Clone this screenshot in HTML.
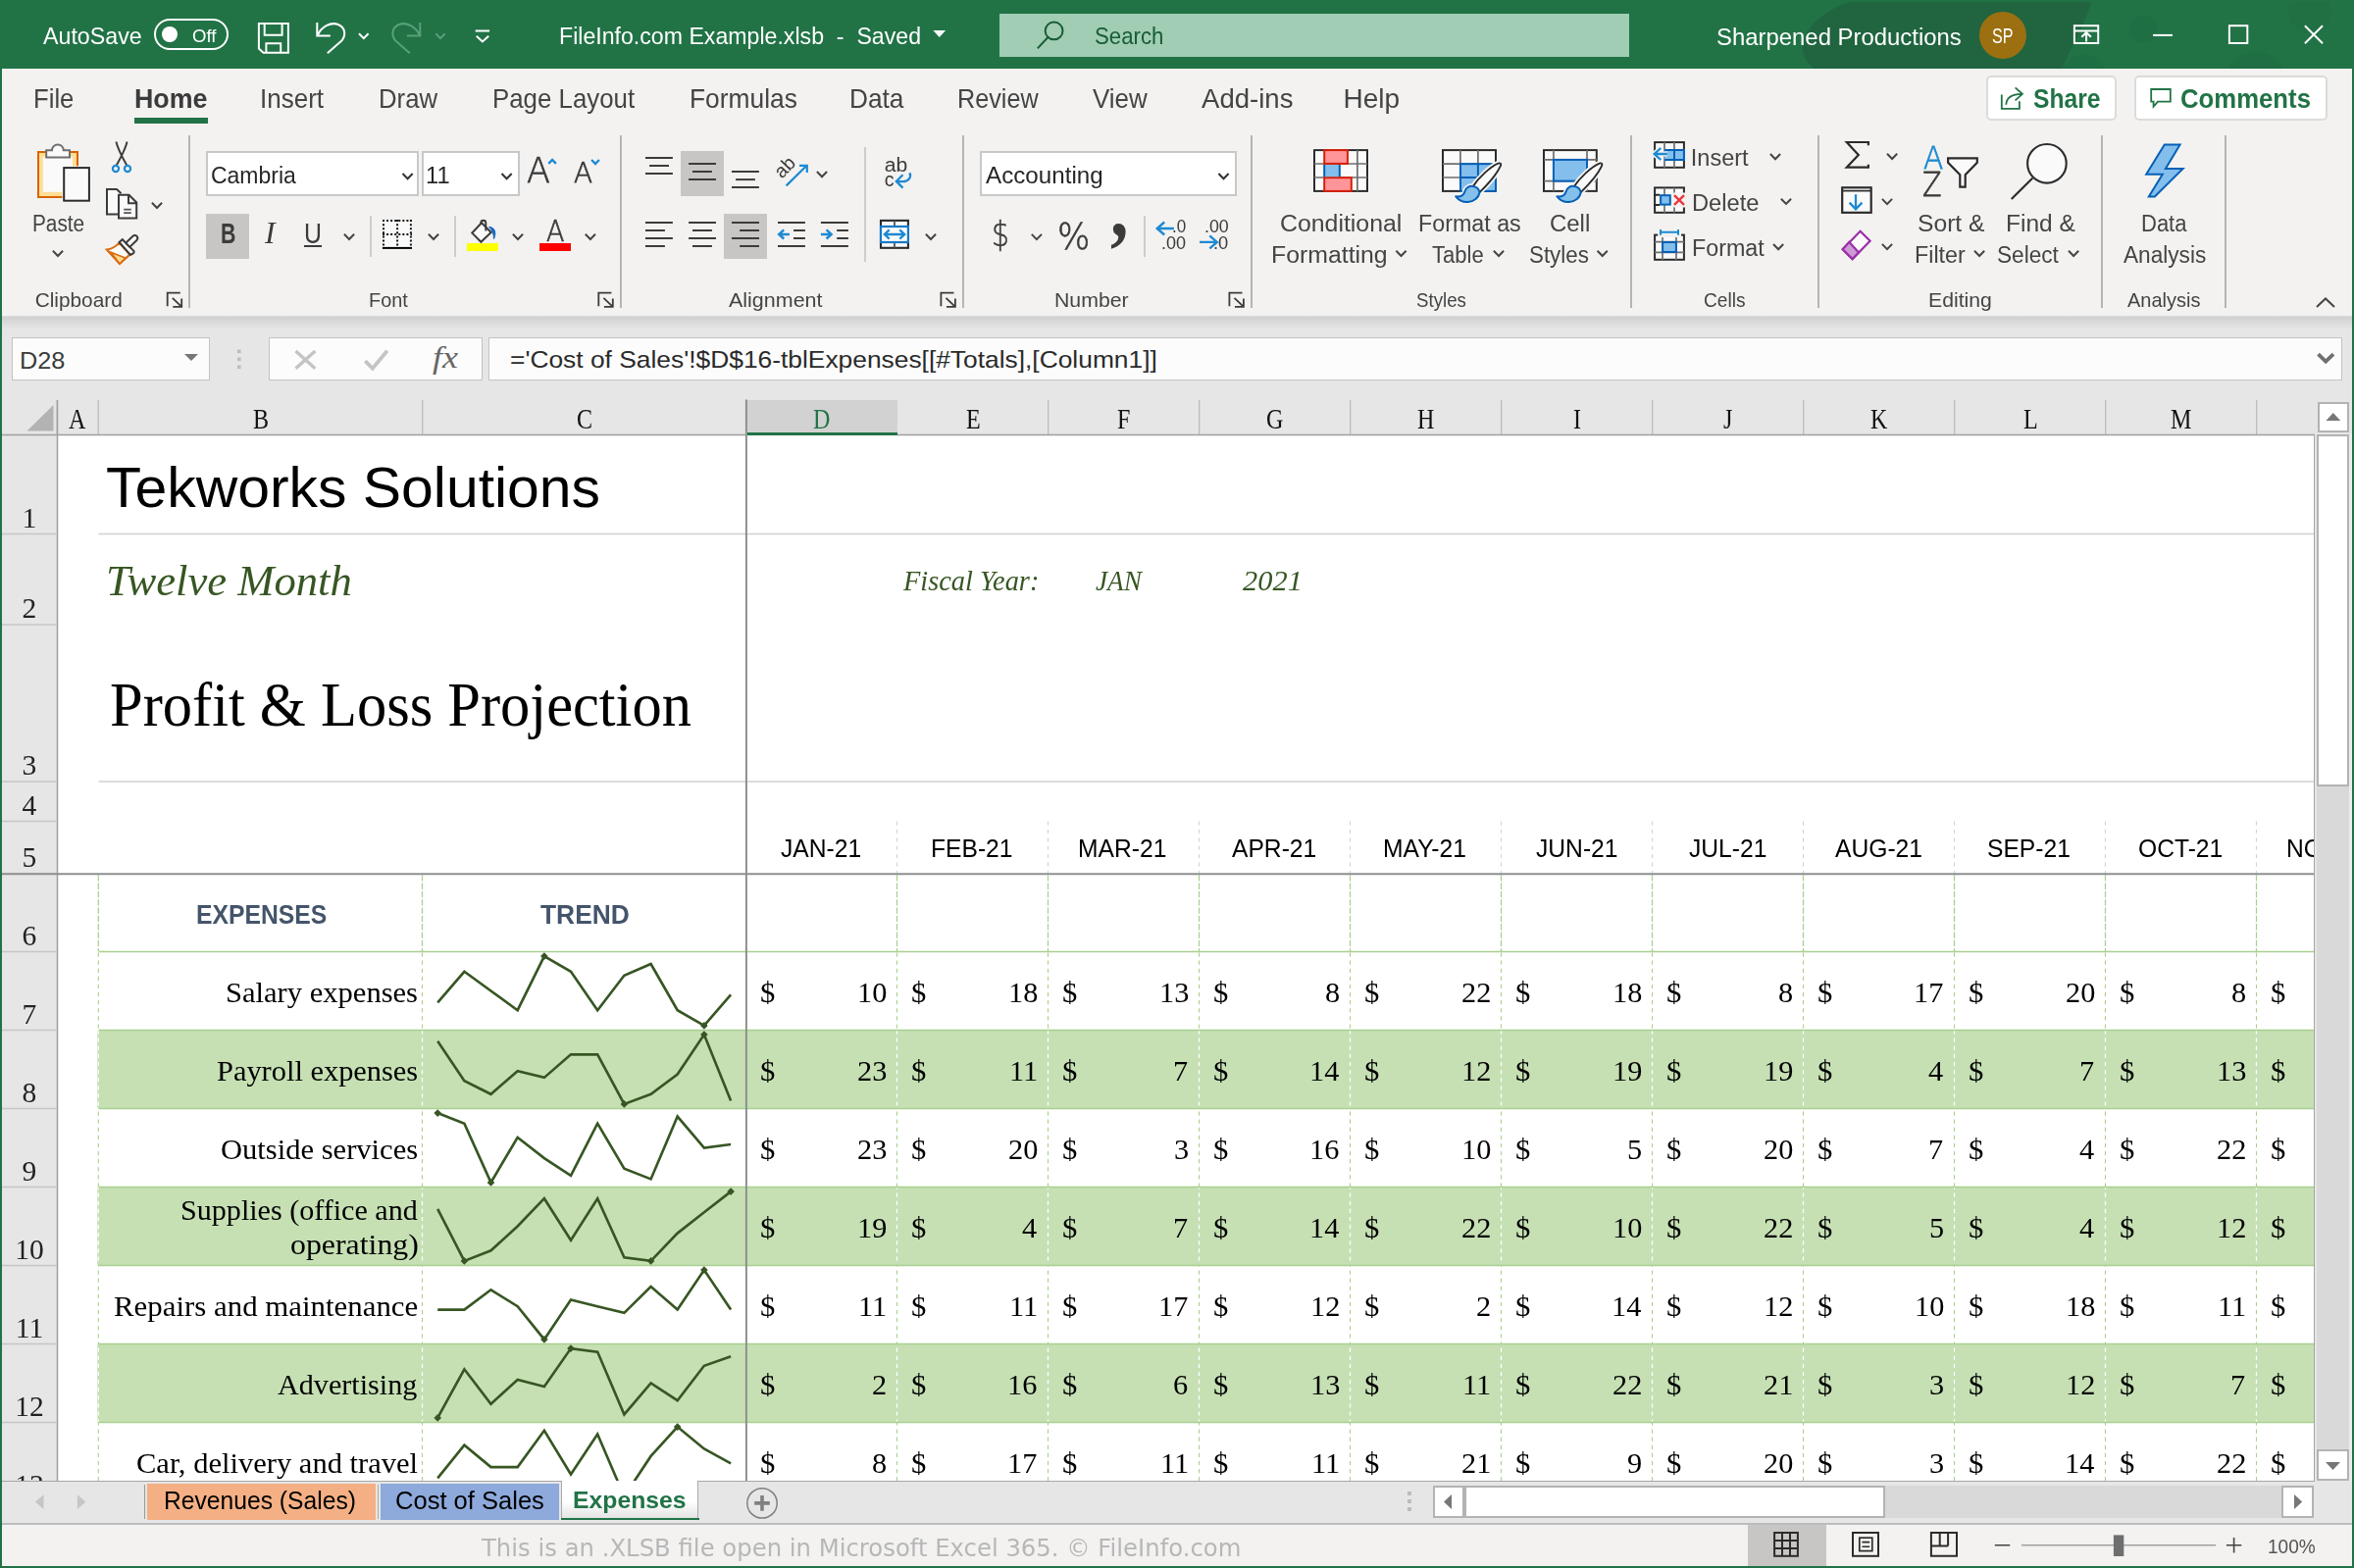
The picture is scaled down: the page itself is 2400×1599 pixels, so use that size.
<!DOCTYPE html>
<html lang="en"><head><meta charset="utf-8"><title>FileInfo.com Example.xlsb - Excel</title>
<style>
html,body{margin:0;padding:0}
body{width:2400px;height:1599px;position:relative;overflow:hidden;background:#fff;font-family:'Liberation Sans',sans-serif}
svg{overflow:visible}
</style></head><body>
<div style="position:absolute;left:0;top:0;width:2400px;height:1599px;will-change:transform">
<div style="position:absolute;left:0px;top:0px;width:2400px;height:1599px;background:#217346;"></div>
<div style="position:absolute;left:2px;top:69.6px;width:2396px;height:1527.4px;background:#f3f2f1;"></div>
<div style="position:absolute;left:1780px;top:2px;width:618px;height:67.6px;overflow:hidden"><svg width="618" height="68" viewBox="0 0 618 68"><path d="M70 68C40 45 70 12 105 0H352C345 25 330 50 322 68Z" fill="#20633f" opacity=".85"/><circle cx="405" cy="28" r="14" fill="#1f6a41" opacity=".4"/><circle cx="520" cy="80" r="30" fill="#1f6a41" opacity=".5"/><circle cx="575" cy="10" r="22" fill="#1f6a41" opacity=".35"/><circle cx="345" cy="75" r="22" fill="#1f6a41" opacity=".4"/></svg></div>
<span style="position:absolute;top:25.00px;font:400 24.6px/1 'Liberation Sans',sans-serif;color:#fff;white-space:pre;left:44.00px;transform:scaleX(0.9437);transform-origin:0 0;">AutoSave</span>
<div style="position:absolute;left:157.3px;top:19px;width:71.400px;height:28px;border:2px solid #fff;border-radius:16px"></div>
<div style="position:absolute;left:165.1px;top:27.1px;width:15.800px;height:15.800px;border-radius:50%;background:#fff"></div>
<span style="position:absolute;top:28.00px;font:400 18.5px/1 'Liberation Sans',sans-serif;color:#fff;white-space:pre;left:195.60px;transform:scaleX(1.0041);transform-origin:0 0;">Off</span>
<svg style="position:absolute;left:0px;top:0px;" width="2400" height="70" viewBox="0 0 2400 70"><g fill="none" stroke="#fff" stroke-width="2"><path d="M263.9 23.9H293.9V53.7H268.5L263.9 49.6Z M269.7 23.900V35.700H287.600V23.900 M271.400 53.700V44.200H286.200V53.700" /><path d="M323.3 23V36.500H336.800 M323.800 36C327.500 27.500 337 22 344.800 25C352 28 353.500 36.500 347.500 42.300L333.800 54.300"/><path d="M366 34.300L370.800 39.100L375.600 34.300"/><g stroke="#57a07b"><path d="M428.300 23V36.500H414.800 M427.800 36C424.100 27.500 414.600 22 406.800 25C399.600 28 398.100 36.500 404.100 42.300L417.800 54.300"/><path d="M444.300 34.300L449 39.100L453.700 34.300"/></g><path d="M484.700 31.400H499.100 M485.800 36.800L491.900 42.400L498.200 36.800"/></g></svg>
<span style="position:absolute;top:25.00px;font:400 24.6px/1 'Liberation Sans',sans-serif;color:#fff;white-space:pre;left:569.82px;transform:scaleX(0.9407);transform-origin:0 0;">FileInfo.com Example.xlsb  -  Saved</span>
<svg style="position:absolute;left:951px;top:31px;" width="14" height="8" viewBox="0 0 14 8"><path d="M0.4 0.1H13.1L6.75 6.9Z" fill="#fff"/></svg>
<div style="position:absolute;left:1019px;top:14.1px;width:642px;height:43.7px;background:#a0cdb4;"></div>
<svg style="position:absolute;left:0px;top:0px;" width="2400" height="70" viewBox="0 0 2400 70"><g fill="none" stroke="#185c37" stroke-width="2"><circle cx="1074.6" cy="31.4" r="8.9"/><path d="M1068.2 38.300L1057.800 49.400"/></g></svg>
<span style="position:absolute;top:25.00px;font:400 24.6px/1 'Liberation Sans',sans-serif;color:#185c37;white-space:pre;left:1116.10px;transform:scaleX(0.9036);transform-origin:0 0;">Search</span>
<span style="position:absolute;top:26.00px;font:400 24.6px/1 'Liberation Sans',sans-serif;color:#fff;white-space:pre;left:1749.53px;transform:scaleX(0.9717);transform-origin:0 0;">Sharpened Productions</span>
<div style="position:absolute;left:2017.9px;top:11.8px;width:48.3px;height:48.3px;border-radius:50%;background:#9c7010"></div>
<span style="position:absolute;top:26.00px;font:400 21.6px/1 'Liberation Sans',sans-serif;color:#fff;white-space:pre;left:2030.60px;transform:scaleX(0.7464);transform-origin:0 0;">SP</span>
<svg style="position:absolute;left:0px;top:0px;" width="2400" height="70" viewBox="0 0 2400 70"><g fill="none" stroke="#fff" stroke-width="2"><rect x="2114.9" y="26.2" width="24.300" height="17.800"/><path d="M2114.9 31.400H2139.200M2127.100 42.500V33.600M2122.300 37.700L2127.100 33.200L2131.900 37.700"/><path d="M2195.100 35.900H2215"/><rect x="2272.900" y="26.200" width="18.400" height="17.800"/><path d="M2349.900 26.200L2368 44.300M2368 26.200L2349.900 44.300"/></g></svg>
<span style="position:absolute;top:87.00px;font:400 28px/1 'Liberation Sans',sans-serif;color:#444;white-space:pre;left:34.17px;transform:scaleX(0.9167);transform-origin:0 0;">File</span>
<span style="position:absolute;top:87.00px;font:700 28px/1 'Liberation Sans',sans-serif;color:#3b3b3b;white-space:pre;left:137.04px;transform:scaleX(0.9577);transform-origin:0 0;">Home</span>
<div style="position:absolute;left:137px;top:120px;width:75px;height:6px;background:#217346;"></div>
<span style="position:absolute;top:87.00px;font:400 28px/1 'Liberation Sans',sans-serif;color:#444;white-space:pre;left:265.44px;transform:scaleX(0.9290);transform-origin:0 0;">Insert</span>
<span style="position:absolute;top:87.00px;font:400 28px/1 'Liberation Sans',sans-serif;color:#444;white-space:pre;left:385.86px;transform:scaleX(0.9202);transform-origin:0 0;">Draw</span>
<span style="position:absolute;top:87.00px;font:400 28px/1 'Liberation Sans',sans-serif;color:#444;white-space:pre;left:502.15px;transform:scaleX(0.9231);transform-origin:0 0;">Page Layout</span>
<span style="position:absolute;top:87.00px;font:400 28px/1 'Liberation Sans',sans-serif;color:#444;white-space:pre;left:702.62px;transform:scaleX(0.9412);transform-origin:0 0;">Formulas</span>
<span style="position:absolute;top:87.00px;font:400 28px/1 'Liberation Sans',sans-serif;color:#444;white-space:pre;left:866.12px;transform:scaleX(0.9380);transform-origin:0 0;">Data</span>
<span style="position:absolute;top:87.00px;font:400 28px/1 'Liberation Sans',sans-serif;color:#444;white-space:pre;left:975.70px;transform:scaleX(0.8997);transform-origin:0 0;">Review</span>
<span style="position:absolute;top:87.00px;font:400 28px/1 'Liberation Sans',sans-serif;color:#444;white-space:pre;left:1113.50px;transform:scaleX(0.9268);transform-origin:0 0;">View</span>
<span style="position:absolute;top:87.00px;font:400 28px/1 'Liberation Sans',sans-serif;color:#444;white-space:pre;left:1224.50px;transform:scaleX(0.9847);transform-origin:0 0;">Add-ins</span>
<span style="position:absolute;top:87.00px;font:400 28px/1 'Liberation Sans',sans-serif;color:#444;white-space:pre;left:1369.50px;">Help</span>
<div style="position:absolute;left:2025px;top:76.6px;width:129px;height:42.6px;border:2px solid #dddbd9;border-radius:5px;background:#fff"></div>
<div style="position:absolute;left:2175.8px;top:76.6px;width:193.2px;height:42.6px;border:2px solid #dddbd9;border-radius:5px;background:#fff"></div>
<svg style="position:absolute;left:0px;top:0px;" width="2400" height="140" viewBox="0 0 2400 140"><g fill="none" stroke="#217346" stroke-width="1.8"><path d="M2040.8 96.5V110.9H2058.9V103.3"/><path d="M2045.3 106.7C2045.5 100 2050 96 2061.3 95.8M2054.600 89.400L2061.900 95.800L2054.600 102.300"/><path d="M2193.2 91H2212.800V103.700H2200L2195.600 108.600V103.700H2193.200Z"/></g></svg>
<span style="position:absolute;top:88.00px;font:700 26.8px/1 'Liberation Sans',sans-serif;color:#217346;white-space:pre;left:2073.00px;transform:scaleX(0.9202);transform-origin:0 0;">Share</span>
<span style="position:absolute;top:88.00px;font:700 26.8px/1 'Liberation Sans',sans-serif;color:#217346;white-space:pre;left:2223.04px;transform:scaleX(0.9600);transform-origin:0 0;">Comments</span>
<div style="position:absolute;left:2px;top:136px;width:2396px;height:186px;background:#f3f2f1;"></div>
<div style="position:absolute;left:2px;top:322px;width:2396px;height:14px;background:linear-gradient(#dcdcdc 0%,#d1d1d1 14%,#dcdcdc 55%,#e6e6e6 100%)"></div>
<div style="position:absolute;left:192.1px;top:138px;width:1.8px;height:175.5px;background:#b6b4b2;"></div>
<div style="position:absolute;left:632.1px;top:138px;width:1.8px;height:175.5px;background:#b6b4b2;"></div>
<div style="position:absolute;left:981.1px;top:138px;width:1.8px;height:175.5px;background:#b6b4b2;"></div>
<div style="position:absolute;left:1275.1px;top:138px;width:1.8px;height:175.5px;background:#b6b4b2;"></div>
<div style="position:absolute;left:1662.1px;top:138px;width:1.8px;height:175.5px;background:#b6b4b2;"></div>
<div style="position:absolute;left:1853.1px;top:138px;width:1.8px;height:175.5px;background:#b6b4b2;"></div>
<div style="position:absolute;left:2142.1px;top:138px;width:1.8px;height:175.5px;background:#b6b4b2;"></div>
<div style="position:absolute;left:2268.1px;top:138px;width:1.8px;height:175.5px;background:#b6b4b2;"></div>
<div style="position:absolute;left:377.1px;top:220px;width:1.8px;height:42px;background:#cfcdcb;"></div>
<div style="position:absolute;left:463.1px;top:220px;width:1.8px;height:42px;background:#cfcdcb;"></div>
<div style="position:absolute;left:881.1px;top:150px;width:1.8px;height:117px;background:#cfcdcb;"></div>
<div style="position:absolute;left:1165.8px;top:220px;width:1.8px;height:42px;background:#cfcdcb;"></div>
<div style="position:absolute;left:210.1px;top:218.1px;width:43.8px;height:45.8px;background:#c8c6c4;"></div>
<div style="position:absolute;left:694px;top:154px;width:44px;height:46px;background:#c8c6c4;"></div>
<div style="position:absolute;left:738.1px;top:218px;width:43.8px;height:45.9px;background:#c8c6c4;"></div>
<div style="position:absolute;left:210px;top:154px;width:213.4px;height:42px;border:2px solid #c8c8c8;background:#fff"></div>
<div style="position:absolute;left:429.6px;top:154px;width:96.4px;height:42px;border:2px solid #c8c8c8;background:#fff"></div>
<div style="position:absolute;left:999px;top:154px;width:257.6px;height:42px;border:2px solid #c8c8c8;background:#fff"></div>
<span style="position:absolute;top:217.00px;font:400 23.5px/1 'Liberation Sans',sans-serif;color:#444;white-space:pre;left:32.72px;transform:scaleX(0.8844);transform-origin:0 0;">Paste</span>
<span style="position:absolute;top:296.00px;font:400 20.8px/1 'Liberation Sans',sans-serif;color:#444;white-space:pre;left:35.70px;">Clipboard</span>
<span style="position:absolute;top:167.00px;font:400 24.6px/1 'Liberation Sans',sans-serif;color:#262626;white-space:pre;left:214.97px;transform:scaleX(0.9343);transform-origin:0 0;">Cambria</span>
<span style="position:absolute;top:167.00px;font:400 24.6px/1 'Liberation Sans',sans-serif;color:#262626;white-space:pre;left:434.04px;transform:scaleX(0.9643);transform-origin:0 0;">11</span>
<span style="position:absolute;top:156.00px;font:400 36px/1 'DejaVu Sans Light','DejaVu Sans',sans-serif;color:#3b3b3b;white-space:pre;left:536.83px;transform:scaleX(0.9696);transform-origin:0 0;-webkit-text-stroke:0.75px #3b3b3b;">A</span>
<span style="position:absolute;top:163.00px;font:400 27.6px/1 'DejaVu Sans Light','DejaVu Sans',sans-serif;color:#3b3b3b;white-space:pre;left:584.90px;transform:scaleX(1.0111);transform-origin:0 0;-webkit-text-stroke:0.75px #3b3b3b;">A</span>
<span style="position:absolute;top:224.00px;font:700 29px/1 'Liberation Sans',sans-serif;color:#3b3b3b;white-space:pre;left:224.96px;transform:scaleX(0.7368);transform-origin:0 0;">B</span>
<span style="position:absolute;top:223.00px;font:italic 400 30.5px/1 'Liberation Serif',serif;color:#3b3b3b;white-space:pre;left:270.24px;transform:scaleX(1.0385);transform-origin:0 0;">I</span>
<span style="position:absolute;top:224.00px;font:400 29.2px/1 'Liberation Sans',sans-serif;color:#3b3b3b;white-space:pre;left:309.99px;transform:scaleX(0.8529);transform-origin:0 0;">U</span>
<div style="position:absolute;left:310.1px;top:249.9px;width:17.9px;height:1.9px;background:#3b3b3b;"></div>
<div style="position:absolute;left:475.9px;top:248.1px;width:32.2px;height:7.9px;background:#ffff00;"></div>
<span style="position:absolute;top:222.00px;font:400 29.6px/1 'DejaVu Sans Light','DejaVu Sans',sans-serif;color:#3b3b3b;white-space:pre;left:557.30px;transform:scaleX(0.9100);transform-origin:0 0;-webkit-text-stroke:0.7px #3b3b3b;">A</span>
<div style="position:absolute;left:549.9px;top:248.1px;width:32.2px;height:7.9px;background:#ff0000;"></div>
<span style="position:absolute;top:296.00px;font:400 20.8px/1 'Liberation Sans',sans-serif;color:#444;white-space:pre;left:376.44px;transform:scaleX(0.9575);transform-origin:0 0;">Font</span>
<span style="position:absolute;top:296.00px;font:400 20.8px/1 'Liberation Sans',sans-serif;color:#444;white-space:pre;left:743.00px;transform:scaleX(1.0324);transform-origin:0 0;">Alignment</span>
<span style="position:absolute;top:167.00px;font:400 24.6px/1 'Liberation Sans',sans-serif;color:#262626;white-space:pre;left:1004.70px;transform:scaleX(0.9834);transform-origin:0 0;">Accounting</span>
<span style="position:absolute;top:221.00px;font:400 35.5px/1 'DejaVu Sans Light','DejaVu Sans',sans-serif;color:#3b3b3b;white-space:pre;left:1011.21px;transform:scaleX(0.7944);transform-origin:0 0;-webkit-text-stroke:0.65px #3b3b3b;">$</span>
<span style="position:absolute;top:223.00px;font:400 37.5px/1 'DejaVu Sans Light','DejaVu Sans',sans-serif;color:#3b3b3b;white-space:pre;left:1078.42px;transform:scaleX(0.9387);transform-origin:0 0;-webkit-text-stroke:0.65px #3b3b3b;">%</span>
<span style="position:absolute;top:170.00px;font:700 84px/1 'Liberation Serif',serif;color:#3b3b3b;white-space:pre;left:1131.72px;transform:scaleX(0.8765);transform-origin:0 0;">,</span>
<span style="position:absolute;top:223.00px;font:400 17.9px/1 'Liberation Sans',sans-serif;color:#3b3b3b;white-space:pre;left:1194.55px;transform:scaleX(0.9520);transform-origin:0 0;">.0</span>
<span style="position:absolute;top:240.00px;font:400 17.9px/1 'Liberation Sans',sans-serif;color:#3b3b3b;white-space:pre;left:1183.69px;transform:scaleX(1.0075);transform-origin:0 0;">.00</span>
<span style="position:absolute;top:223.00px;font:400 17.9px/1 'Liberation Sans',sans-serif;color:#3b3b3b;white-space:pre;left:1228.01px;transform:scaleX(0.9950);transform-origin:0 0;">.00</span>
<span style="position:absolute;top:240.00px;font:400 17.9px/1 'Liberation Sans',sans-serif;color:#3b3b3b;white-space:pre;left:1237.48px;transform:scaleX(1.0236);transform-origin:0 0;">.0</span>
<span style="position:absolute;top:296.00px;font:400 20.8px/1 'Liberation Sans',sans-serif;color:#444;white-space:pre;left:1074.98px;transform:scaleX(1.0227);transform-origin:0 0;">Number</span>
<span style="position:absolute;top:217.00px;font:400 23.5px/1 'Liberation Sans',sans-serif;color:#444;white-space:pre;left:1304.94px;transform:scaleX(1.0576);transform-origin:0 0;">Conditional</span>
<span style="position:absolute;top:249.00px;font:400 23.5px/1 'Liberation Sans',sans-serif;color:#444;white-space:pre;left:1296.44px;transform:scaleX(1.0567);transform-origin:0 0;">Formatting</span>
<span style="position:absolute;top:217.00px;font:400 23.5px/1 'Liberation Sans',sans-serif;color:#444;white-space:pre;left:1445.61px;transform:scaleX(0.9902);transform-origin:0 0;">Format as</span>
<span style="position:absolute;top:249.00px;font:400 23.5px/1 'Liberation Sans',sans-serif;color:#444;white-space:pre;left:1460.00px;transform:scaleX(0.9374);transform-origin:0 0;">Table</span>
<span style="position:absolute;top:217.00px;font:400 23.5px/1 'Liberation Sans',sans-serif;color:#444;white-space:pre;left:1580.48px;transform:scaleX(1.0193);transform-origin:0 0;">Cell</span>
<span style="position:absolute;top:249.00px;font:400 23.5px/1 'Liberation Sans',sans-serif;color:#444;white-space:pre;left:1558.85px;transform:scaleX(0.9511);transform-origin:0 0;">Styles</span>
<span style="position:absolute;top:296.00px;font:400 20.8px/1 'Liberation Sans',sans-serif;color:#444;white-space:pre;left:1443.80px;transform:scaleX(0.8980);transform-origin:0 0;">Styles</span>
<span style="position:absolute;top:150.00px;font:400 23.5px/1 'Liberation Sans',sans-serif;color:#444;white-space:pre;left:1723.81px;">Insert</span>
<span style="position:absolute;top:196.00px;font:400 23.5px/1 'Liberation Sans',sans-serif;color:#444;white-space:pre;left:1724.79px;transform:scaleX(1.0081);transform-origin:0 0;">Delete</span>
<span style="position:absolute;top:242.00px;font:400 23.5px/1 'Liberation Sans',sans-serif;color:#444;white-space:pre;left:1724.81px;transform:scaleX(0.9906);transform-origin:0 0;">Format</span>
<span style="position:absolute;top:296.00px;font:400 20.8px/1 'Liberation Sans',sans-serif;color:#444;white-space:pre;left:1736.78px;transform:scaleX(0.9213);transform-origin:0 0;">Cells</span>
<span style="position:absolute;top:145.00px;font:400 32.5px/1 'DejaVu Sans Light','DejaVu Sans',sans-serif;color:#1e8ad2;white-space:pre;left:1960.90px;transform:scaleX(0.9136);transform-origin:0 0;-webkit-text-stroke:0.8px #1e8ad2;">A</span>
<span style="position:absolute;top:173.00px;font:400 32.8px/1 'DejaVu Sans Light','DejaVu Sans',sans-serif;color:#3b3b3b;white-space:pre;left:1960.43px;transform:scaleX(0.8700);transform-origin:0 0;-webkit-text-stroke:0.8px #3b3b3b;">Z</span>
<span style="position:absolute;top:217.00px;font:400 23.5px/1 'Liberation Sans',sans-serif;color:#444;white-space:pre;left:1954.95px;transform:scaleX(1.0491);transform-origin:0 0;">Sort &amp;</span>
<span style="position:absolute;top:249.00px;font:400 23.5px/1 'Liberation Sans',sans-serif;color:#444;white-space:pre;left:1951.91px;transform:scaleX(0.9904);transform-origin:0 0;">Filter</span>
<span style="position:absolute;top:217.00px;font:400 23.5px/1 'Liberation Sans',sans-serif;color:#444;white-space:pre;left:2044.66px;transform:scaleX(1.0425);transform-origin:0 0;">Find &amp;</span>
<span style="position:absolute;top:249.00px;font:400 23.5px/1 'Liberation Sans',sans-serif;color:#444;white-space:pre;left:2036.24px;transform:scaleX(0.9632);transform-origin:0 0;">Select</span>
<span style="position:absolute;top:296.00px;font:400 20.8px/1 'Liberation Sans',sans-serif;color:#444;white-space:pre;left:1965.78px;transform:scaleX(1.0190);transform-origin:0 0;">Editing</span>
<span style="position:absolute;top:217.00px;font:400 23.5px/1 'Liberation Sans',sans-serif;color:#444;white-space:pre;left:2182.86px;transform:scaleX(0.9361);transform-origin:0 0;">Data</span>
<span style="position:absolute;top:249.00px;font:400 23.5px/1 'Liberation Sans',sans-serif;color:#444;white-space:pre;left:2164.70px;transform:scaleX(0.9625);transform-origin:0 0;">Analysis</span>
<span style="position:absolute;top:296.00px;font:400 20.8px/1 'Liberation Sans',sans-serif;color:#444;white-space:pre;left:2168.50px;transform:scaleX(0.9605);transform-origin:0 0;">Analysis</span>
<svg style="position:absolute;left:0;top:0" width="2400" height="340" viewBox="0 0 2400 340"><rect x="39" y="155" width="40" height="46" fill="#ffdd95" stroke="#d86400" stroke-width="2"/><rect x="43.8" y="160.2" width="30.2" height="35.6" fill="#fafafa"/><path d="M47.2 160.6V153.3H53A5.9 5.9 0 0 1 64.8 153.3H71V160.6Z" fill="#fafafa" stroke="#6e6e6e" stroke-width="2" /><rect x="63.4" y="169.3" width="29.3" height="37.2" fill="#f8f8f8"/><rect x="65.2" y="171.1" width="25.7" height="33.6" fill="#fafafa" stroke="#2b2b2b" stroke-width="2"/><path d="M53.9 255.79999999999998L59 261.0L64.1 255.79999999999998" fill="none" stroke="#444" stroke-width="2" /><path d="M118.4 144.5C120 152 124.500 160 129.200 168.500M129.600 144.500C128 152 123.500 160 118.800 168.500" fill="none" stroke="#3b3b3b" stroke-width="1.9" /><circle cx="118" cy="172" r="3.1" fill="none" stroke="#1e8ad2" stroke-width="2.2"/><circle cx="130" cy="172" r="3.1" fill="none" stroke="#1e8ad2" stroke-width="2.2"/><path d="M121 218.5H109V193H119L123.500 197.200" fill="#fafafa" stroke="#3b3b3b" stroke-width="2" /><path d="M121 198.800H131.500L139.200 206.500V222.500H121Z M131 199.300V207.200H138.800" fill="#fafafa" stroke="#3b3b3b" stroke-width="2" /><path d="M126.2 213.600H133.800M126.200 217.100H133.800" fill="none" stroke="#555" stroke-width="1.8" /><path d="M154.9 206.79999999999998L160 212.0L165.1 206.79999999999998" fill="none" stroke="#444" stroke-width="2" /><path d="M121.5 247.6C118 251.5 113.500 254 108.800 254.600L122 269L132.300 259.600Z" fill="#fafafa" stroke="#d86b0f" stroke-width="2" /><path d="M113 257.2L127.800 263L122 269Z" fill="#ffd98f" stroke="#d86b0f" stroke-width="1.6" /><path d="M121.600 247L124.800 244.200L136.300 255.800C137 256.800 136.500 257.800 135.800 258.500L133 260Z" fill="#fafafa" stroke="#3b3b3b" stroke-width="2" /><path d="M128.300 247.800L135.500 240.800C137 239.600 138.800 240 139.700 241.200C140.600 242.400 140.400 243.900 139.400 245L132.300 251.900Z" fill="#fafafa" stroke="#3b3b3b" stroke-width="2" /><path d="M170.7 312.3V298.7H183.8" fill="none" stroke="#3b3b3b" stroke-width="1.8" /><path d="M175.8 303.8L185 312.7M185.2 304.5V312.9H176.3" fill="none" stroke="#3b3b3b" stroke-width="1.8" /><path d="M410.5 177.0L415.6 182.20000000000002L420.70000000000005 177.0" fill="none" stroke="#333" stroke-width="2" /><path d="M511.5 177.0L516.6 182.20000000000002L521.7 177.0" fill="none" stroke="#333" stroke-width="2" /><path d="M559.3 166.9L563.1 163L566.9 166.9" fill="none" stroke="#1e8ad2" stroke-width="2.4" /><path d="M603.1 163L607 167L610.9 163" fill="none" stroke="#1e8ad2" stroke-width="2.4" /><path d="M350.9 238.79999999999998L356 244.0L361.1 238.79999999999998" fill="none" stroke="#444" stroke-width="2" /><rect x="390" y="224" width="30" height="29" fill="#fafafa"/><path d="M390 225.1H420M390 239H420M391 224.1V252M405.1 224.1V252M418.9 224.1V252" fill="none" stroke="#111" stroke-width="2" stroke-dasharray="2 2.07"/><path d="M389.9 252.9H420" fill="none" stroke="#000" stroke-width="2" /><path d="M436.9 238.79999999999998L442 244.0L447.1 238.79999999999998" fill="none" stroke="#444" stroke-width="2" /><path d="M491 227.2L481.3 237.6L490.4 246.8L500.7 237Z" fill="#fafafa" stroke="#3b3b3b" stroke-width="2" /><path d="M490.3 229V227.2A2.5 2.5 0 0 1 495.3 227.200V235.400" fill="none" stroke="#3b3b3b" stroke-width="1.9" /><path d="M498.500 231.300C503 231.500 505.500 235 504.800 239.500C504.500 241.500 504 242.800 503.500 243.800C503.400 239 502 235 498.500 231.300Z" fill="#1565c0" stroke="#1565c0" stroke-width="0.8" /><path d="M522.9 238.79999999999998L528 244.0L533.1 238.79999999999998" fill="none" stroke="#444" stroke-width="2" /><path d="M596.8 238.79999999999998L601.9 244.0L607.0 238.79999999999998" fill="none" stroke="#444" stroke-width="2" /><path d="M610.3000000000001 312.3V298.7H623.4" fill="none" stroke="#3b3b3b" stroke-width="1.8" /><path d="M615.4 303.8L624.6 312.7M624.8000000000001 304.5V312.9H615.9" fill="none" stroke="#3b3b3b" stroke-width="1.8" /><path d="M658 161H685.9 M658 177H685.9" fill="none" stroke="#3b3b3b" stroke-width="2" /><path d="M662.1 169H682.0" fill="none" stroke="#3b3b3b" stroke-width="2" /><path d="M702.1 166.9H730.0 M702.1 183.1H730.0" fill="none" stroke="#3b3b3b" stroke-width="2" /><path d="M706.0 175H725.9" fill="none" stroke="#3b3b3b" stroke-width="2" /><path d="M746 175H773.9 M746 191H773.9" fill="none" stroke="#3b3b3b" stroke-width="2" /><path d="M750.1 183.1H769.9" fill="none" stroke="#3b3b3b" stroke-width="2" /><text x="0" y="0" transform="translate(797.200,182.800) rotate(-46)" font-family="Liberation Sans,sans-serif" font-size="19.5" fill="#3b3b3b">ab</text><path d="M801.6 189.4L822.300 169M815 168.800H822.800V176" fill="none" stroke="#1e8ad2" stroke-width="2.2" /><path d="M832.9 175.0L838 180.20000000000002L843.1 175.0" fill="none" stroke="#444" stroke-width="2" /><text x="901.700" y="175.100" font-family="Liberation Sans,sans-serif" font-size="19.5" fill="#3b3b3b" textLength="23.500" lengthAdjust="spacingAndGlyphs">ab</text><text x="901.700" y="189.500" font-family="Liberation Sans,sans-serif" font-size="19.5" fill="#3b3b3b">c</text><path d="M927.500 176.200C929.500 181 926 185.200 920.500 185.200H914.500M920.500 178.300L913.800 184.900L920.500 191.600" fill="none" stroke="#1e8ad2" stroke-width="2.3" /><path d="M658 226.9H685.9 M658 243H685.9" fill="none" stroke="#3b3b3b" stroke-width="2" /><path d="M658 234.9H677.9 M658 251H677.9" fill="none" stroke="#3b3b3b" stroke-width="2" /><path d="M702.1 226.9H730 M702.1 243H730" fill="none" stroke="#3b3b3b" stroke-width="2" /><path d="M706 234.9H725.9 M706 251H725.9" fill="none" stroke="#3b3b3b" stroke-width="2" /><path d="M746 226.9H774 M746 243H774" fill="none" stroke="#3b3b3b" stroke-width="2" /><path d="M754.1 234.9H774 M754.1 251H774" fill="none" stroke="#3b3b3b" stroke-width="2" /><path d="M793 226.9H820.9 M793 251H820.9" fill="none" stroke="#3b3b3b" stroke-width="2" /><path d="M809 234.9H820.9 M809 243H820.9" fill="none" stroke="#3b3b3b" stroke-width="2" /><path d="M804.9 238.9H794.5M799.200 234.300L794.200 238.900L799.200 243.500" fill="none" stroke="#1e8ad2" stroke-width="2.5" /><path d="M836.9 226.9H864.9 M836.9 251H864.9" fill="none" stroke="#3b3b3b" stroke-width="2" /><path d="M853.2 234.9H864.9 M853.2 243H864.9" fill="none" stroke="#3b3b3b" stroke-width="2" /><path d="M836.9 238.9H847.400M842.600 234.300L847.600 238.900L842.600 243.500" fill="none" stroke="#1e8ad2" stroke-width="2.5" /><rect x="898" y="224.9" width="27.9" height="27.9" fill="#fafafa" stroke="#2b2b2b" stroke-width="2.1"/><path d="M912 225V230M912 248V252.7" fill="none" stroke="#555" stroke-width="1.8" /><rect x="898" y="231" width="27.9" height="16" fill="#fafafa" stroke="#1479c9" stroke-width="2.2"/><path d="M902 239H922M906.700 234.400L901.800 239L906.700 243.600M917.300 234.400L922.200 239L917.300 243.600" fill="none" stroke="#1e8ad2" stroke-width="2.3" /><path d="M943.9 238.79999999999998L949 244.0L954.1 238.79999999999998" fill="none" stroke="#444" stroke-width="2" /><path d="M959.4000000000001 312.3V298.7H972.5" fill="none" stroke="#3b3b3b" stroke-width="1.8" /><path d="M964.5 303.8L973.7 312.7M973.9000000000001 304.5V312.9H965.0" fill="none" stroke="#3b3b3b" stroke-width="1.8" /><path d="M1242.4 177.0L1247.5 182.20000000000002L1252.6 177.0" fill="none" stroke="#333" stroke-width="2" /><path d="M1051.8000000000002 238.9L1056.9 244.10000000000002L1062.0 238.9" fill="none" stroke="#444" stroke-width="2" /><path d="M1196.9 233H1180.500M1187.200 226.500L1179.700 233L1187.200 239.500" fill="none" stroke="#1e8ad2" stroke-width="2.4" /><path d="M1223 246.9H1240M1233.300 240.400L1240.800 246.900L1233.300 253.400" fill="none" stroke="#1e8ad2" stroke-width="2.4" /><path d="M1253.4 312.3V298.7H1266.5" fill="none" stroke="#3b3b3b" stroke-width="1.8" /><path d="M1258.5 303.8L1267.7 312.7M1267.9 304.5V312.9H1259.0" fill="none" stroke="#3b3b3b" stroke-width="1.8" /><rect x="1338" y="151" width="58" height="46" fill="#f8f8f8"/><rect x="1340" y="153.1" width="54" height="41.8" fill="#fafafa" stroke="#2b2b2b" stroke-width="2"/><path d="M1340 167H1394M1340 181H1394M1383.9 153V195" fill="none" stroke="#6e6e6e" stroke-width="1.7" /><rect x="1350.2" y="153.1" width="23.7" height="13.8" fill="#ff9598" stroke="#d81e05" stroke-width="2"/><rect x="1350.2" y="181.2" width="27.6" height="13.7" fill="#ff9598" stroke="#d81e05" stroke-width="2"/><rect x="1350.2" y="168" width="15.600" height="12.200" fill="#83beec"/><path d="M1350.2 168V180.200M1365.800 168V180.200" fill="none" stroke="#0560b6" stroke-width="2" /><path d="M1423.4 255.79999999999998L1428.5 261.0L1433.6 255.79999999999998" fill="none" stroke="#444" stroke-width="2" /><rect x="1471" y="153.1" width="54" height="41.8" fill="#fafafa" stroke="#2b2b2b" stroke-width="2"/><path d="M1488.9 153V195M1506.900 153V195M1471 167.200H1525M1471 181H1525" fill="none" stroke="#6e6e6e" stroke-width="1.7" /><rect x="1489" y="167.2" width="36" height="27.7" fill="#83beec" stroke="#0560b6" stroke-width="2"/><path d="M1506.900 167.200V195M1489 181H1525" fill="none" stroke="#0560b6" stroke-width="2" /><path d="M1501.7 190.1C1507.7 181.2 1519.7 169.7 1527.5 166.6C1529.9 165.8 1530.7 167.4 1529.9 169.2C1525.7 178.2 1516.7 188.2 1508.5 196.1Z" fill="#f6f5f4" stroke="#f6f5f4" stroke-width="5.5" stroke-linejoin="round"/><path d="M1501.7 190.1C1498.7 189.2 1494.2 191.2 1493.2 195.7C1492.5 198.7 1489.7 200.8 1484.2 200.3C1487.7 204.7 1492.7 206.2 1496.6 205.9C1502.7 205.5 1507.7 201.7 1508.5 196.1C1507.7 192.7 1504.7 190.4 1501.7 190.1Z" fill="#f6f5f4" stroke="#f6f5f4" stroke-width="5" stroke-linejoin="round"/><path d="M1501.7 190.1C1507.7 181.2 1519.7 169.7 1527.5 166.6C1529.9 165.8 1530.7 167.4 1529.9 169.2C1525.7 178.2 1516.7 188.2 1508.5 196.1Z" fill="#fafafa" stroke="#2b2b2b" stroke-width="1.9" stroke-linejoin="round"/><path d="M1501.7 190.1C1498.7 189.2 1494.2 191.2 1493.2 195.7C1492.5 198.7 1489.7 200.8 1484.2 200.3C1487.7 204.7 1492.7 206.2 1496.6 205.9C1502.7 205.5 1507.7 201.7 1508.5 196.1C1507.7 192.7 1504.7 190.4 1501.7 190.1Z" fill="#85c0ec" stroke="#0560b6" stroke-width="2" stroke-linejoin="round"/><path d="M1522.9 255.79999999999998L1528 261.0L1533.1 255.79999999999998" fill="none" stroke="#444" stroke-width="2" /><rect x="1574" y="153.1" width="53.8" height="41.8" fill="#fafafa" stroke="#2b2b2b" stroke-width="2"/><path d="M1583.9 153V195M1618 153V195M1574 162.800H1628M1574 184.600H1628" fill="none" stroke="#6e6e6e" stroke-width="1.7" /><rect x="1583.9" y="162.9" width="34.1" height="21.7" fill="#83beec" stroke="#0560b6" stroke-width="2"/><path d="M1604.9 190.1C1610.9 181.2 1622.9 169.7 1630.7 166.6C1633.1 165.8 1633.9 167.4 1633.1 169.2C1628.9 178.2 1619.9 188.2 1611.7 196.1Z" fill="#f6f5f4" stroke="#f6f5f4" stroke-width="5.5" stroke-linejoin="round"/><path d="M1604.9 190.1C1601.9 189.2 1597.4 191.2 1596.4 195.7C1595.7 198.7 1592.9 200.8 1587.4 200.3C1590.9 204.7 1595.9 206.2 1599.8 205.9C1605.9 205.5 1610.9 201.7 1611.7 196.1C1610.9 192.7 1607.9 190.4 1604.9 190.1Z" fill="#f6f5f4" stroke="#f6f5f4" stroke-width="5" stroke-linejoin="round"/><path d="M1604.9 190.1C1610.9 181.2 1622.9 169.7 1630.7 166.6C1633.1 165.8 1633.9 167.4 1633.1 169.2C1628.9 178.2 1619.9 188.2 1611.7 196.1Z" fill="#fafafa" stroke="#2b2b2b" stroke-width="1.9" stroke-linejoin="round"/><path d="M1604.9 190.1C1601.9 189.2 1597.4 191.2 1596.4 195.7C1595.7 198.7 1592.9 200.8 1587.4 200.3C1590.9 204.7 1595.9 206.2 1599.8 205.9C1605.9 205.5 1610.9 201.7 1611.7 196.1C1610.9 192.7 1607.9 190.4 1604.9 190.1Z" fill="#85c0ec" stroke="#0560b6" stroke-width="2" stroke-linejoin="round"/><path d="M1628.6000000000001 255.79999999999998L1633.7 261.0L1638.8 255.79999999999998" fill="none" stroke="#444" stroke-width="2" /><rect x="1687.1" y="145.1" width="29.8" height="25.7" fill="#fafafa" stroke="#2b2b2b" stroke-width="2"/><path d="M1697 145V171M1707 145V171" fill="none" stroke="#6e6e6e" stroke-width="1.7" /><rect x="1697.2" y="152" width="20.700" height="12" fill="#83beec"/><path d="M1697.2 153H1717.900M1697.200 163H1717.900M1707 152V164M1716.900 152V164" fill="none" stroke="#0560b6" stroke-width="2" /><path d="M1700 157H1687M1693.300 150.800L1686.300 157L1693.300 163.200" fill="none" stroke="#f3f2f1" stroke-width="5" /><path d="M1699.9 157H1687.500M1693.300 151L1686.600 157L1693.300 163" fill="none" stroke="#1e8ad2" stroke-width="2.3" /><path d="M1804.9 157.0L1810 162.20000000000002L1815.1 157.0" fill="none" stroke="#444" stroke-width="2" /><rect x="1687.1" y="191.4" width="29.8" height="25.4" fill="#fafafa" stroke="#2b2b2b" stroke-width="2"/><path d="M1697 191.4V217M1707 191.400V217" fill="none" stroke="#6e6e6e" stroke-width="1.7" /><rect x="1690" y="199.8" width="29.500" height="8.300" fill="#f3f2f1"/><rect x="1704.5" y="196.5" width="15" height="15" fill="#f3f2f1"/><path d="M1686.1 198.8H1692M1686.100 209.100H1692" fill="none" stroke="#2b2b2b" stroke-width="2" /><rect x="1693.1" y="199.2" width="9.7" height="9.4" fill="#83beec" stroke="#0560b6" stroke-width="2"/><path d="M1707 199.200L1717 208.800M1717 199.200L1707 208.800" fill="none" stroke="#e8373d" stroke-width="2.4" /><path d="M1815.9 202.7L1821 207.9L1826.1 202.7" fill="none" stroke="#444" stroke-width="2" /><rect x="1687.1" y="239.6" width="29.8" height="25.2" fill="#fafafa" stroke="#2b2b2b" stroke-width="2"/><rect x="1690.2" y="232" width="23.800" height="10" fill="#f3f2f1"/><path d="M1695 242V265M1709 242V265M1687 246.600H1717M1687 257.300H1717" fill="none" stroke="#6e6e6e" stroke-width="1.7" /><rect x="1695.1" y="247" width="13.8" height="10" fill="#83beec" stroke="#0560b6" stroke-width="2"/><path d="M1693 236.800H1711M1693 233.900V239.700M1711 233.900V239.700" fill="none" stroke="#1e8ad2" stroke-width="2" /><path d="M1808.0 249.0L1813.1 254.20000000000002L1818.1999999999998 249.0" fill="none" stroke="#444" stroke-width="2" /><path d="M1904.9 148.2V145H1882.8L1894.800 158L1882.800 170.700H1904.900V167.700" fill="none" stroke="#2b2b2b" stroke-width="2.2" /><path d="M1924.0 156.79999999999998L1929.1 162.0L1934.1999999999998 156.79999999999998" fill="none" stroke="#444" stroke-width="2" /><rect x="1878.2" y="191.3" width="29.5" height="25.5" fill="#fafafa" stroke="#2b2b2b" stroke-width="2.2"/><path d="M1878 194.6H1908" fill="none" stroke="#2b2b2b" stroke-width="1.7" /><path d="M1892 198.2V212.800M1885.600 206.600L1892 213.400L1898.400 206.600" fill="none" stroke="#1e8ad2" stroke-width="2.3" /><path d="M1918.9 202.9L1924 208.10000000000002L1929.1 202.9" fill="none" stroke="#444" stroke-width="2" /><path d="M1896.6 235.8L1906.600 245.700L1888.600 264.100L1878.700 254.200Z" fill="#fafafa" stroke="#9a2fa8" stroke-width="2.2" /><path d="M1885.3 246.8L1895 257.500L1888.600 264.100L1878.700 254.200Z" fill="#cf99d6" stroke="#9a2fa8" stroke-width="2.2" /><path d="M1918.9 248.9L1924 254.10000000000002L1929.1 248.9" fill="none" stroke="#444" stroke-width="2" /><path d="M1986.1 161.4H2015.800V165.800L2003.700 178.200V190.600H1998.300V178.200L1986.100 165.800Z" fill="#fafafa" stroke="#2b2b2b" stroke-width="2.2" /><path d="M2013.0 255.79999999999998L2018.1 261.0L2023.1999999999998 255.79999999999998" fill="none" stroke="#444" stroke-width="2" /><circle cx="2086.9" cy="166.85" r="19.8" fill="#fafafa" stroke="#2b2b2b" stroke-width="2.1"/><path d="M2072.2 181.700L2050.700 203" fill="none" stroke="#2b2b2b" stroke-width="2.2" /><path d="M2109.0 255.79999999999998L2114.1 261.0L2119.2 255.79999999999998" fill="none" stroke="#444" stroke-width="2" /><path d="M2206.8 147.5H2222.600L2207.900 171.900H2225.600L2196.900 200.400H2190.800L2204.800 177.750H2188.200Z" fill="#83beec" stroke="#0560b6" stroke-width="2" /><path d="M2362 313L2371 304.5L2380 313" fill="none" stroke="#444" stroke-width="2" /></svg>
</div>
<div style="position:absolute;left:2px;top:335.5px;width:2396px;height:72.5px;background:#e6e6e6;"></div>
<div style="position:absolute;left:12.3px;top:344px;width:199.5px;height:41.8px;border:1px solid #c3c3c3;background:#fcfcfc"></div>
<div style="position:absolute;left:274.4px;top:344px;width:215.4px;height:41.8px;border:1px solid #c3c3c3;background:#fcfcfc"></div>
<div style="position:absolute;left:498.3px;top:344px;width:1887.5px;height:41.8px;border:1px solid #c3c3c3;background:#fcfcfc"></div>
<span style="position:absolute;top:356.00px;font:400 24.2px/1 'Liberation Sans',sans-serif;color:#3a3a3a;white-space:pre;left:19.65px;transform:scaleX(1.0461);transform-origin:0 0;">D28</span>
<svg style="position:absolute;left:0;top:330px" width="2400" height="80" viewBox="0 330 2400 80"><path d="M188 361H202L195 368Z" fill="#777"/><rect x="242" y="356.5" width="3.6" height="3.6" fill="#bdbdbd"/><rect x="242" y="364.5" width="3.6" height="3.6" fill="#bdbdbd"/><rect x="242" y="372.5" width="3.6" height="3.6" fill="#bdbdbd"/><path d="M301.5 358L321.300 375.800M321.300 358L301.500 375.800" stroke="#c6c4c2" stroke-width="3.4" fill="none"/><path d="M372.3 368.200L379.800 375.600L394.800 357.800" stroke="#c6c4c2" stroke-width="3.8" fill="none"/><path d="M2363.5 361.2L2371.2 368.6L2379 361.2" stroke="#707070" stroke-width="3.8" fill="none"/></svg>
<span style="position:absolute;top:349.00px;font:italic 400 31px/1 'Liberation Serif',serif;color:#666;white-space:pre;left:440.90px;transform:scaleX(1.1586);transform-origin:0 0;">fx</span>
<span style="position:absolute;top:355.00px;font:400 24.4px/1 'Liberation Sans',sans-serif;color:#2a2a2a;white-space:pre;left:519.62px;transform:scaleX(1.0806);transform-origin:0 0;">='Cost of Sales'!$D$16-tblExpenses[[#Totals],[Column1]]</span>
<div style="position:absolute;left:58.5px;top:443px;width:2301.5px;height:1067px;background:#fff;"></div>
<div style="position:absolute;left:2px;top:408px;width:2358px;height:35.5px;background:#e6e6e6;"></div>
<div style="position:absolute;left:2px;top:443px;width:56.5px;height:1067px;background:#e6e6e6;"></div>
<div style="position:absolute;left:762px;top:407.6px;width:153px;height:35px;background:#d2d2d2;"></div>
<div style="position:absolute;left:762px;top:440.8px;width:153px;height:3px;background:#217346;"></div>
<svg style="position:absolute;left:0;top:400px" width="2400" height="1110" viewBox="0 400 2400 1110"><path d="M27.5 439.5L54.5 413V439.5Z" fill="#b3b3b3"/><path d="M58.2 408V443" stroke="#b9b9b9" stroke-width="1.2"/><path d="M100.2 408V443" stroke="#b9b9b9" stroke-width="1.2"/><path d="M430.7 408V443" stroke="#b9b9b9" stroke-width="1.2"/><path d="M1068.7 408V443" stroke="#b9b9b9" stroke-width="1.2"/><path d="M1222.7 408V443" stroke="#b9b9b9" stroke-width="1.2"/><path d="M1376.7 408V443" stroke="#b9b9b9" stroke-width="1.2"/><path d="M1530.7 408V443" stroke="#b9b9b9" stroke-width="1.2"/><path d="M1684.7 408V443" stroke="#b9b9b9" stroke-width="1.2"/><path d="M1838.7 408V443" stroke="#b9b9b9" stroke-width="1.2"/><path d="M1992.7 408V443" stroke="#b9b9b9" stroke-width="1.2"/><path d="M2146.7 408V443" stroke="#b9b9b9" stroke-width="1.2"/><path d="M2300.7 408V443" stroke="#b9b9b9" stroke-width="1.2"/><path d="M2 443.5H761M915 443.5H2360" stroke="#9f9f9f" stroke-width="1.5"/><path d="M58.5 408V1510" stroke="#9f9f9f" stroke-width="1.5"/><path d="M2 544.5H58" stroke="#c6c6c6" stroke-width="1.3"/><path d="M2 637H58" stroke="#c6c6c6" stroke-width="1.3"/><path d="M2 797H58" stroke="#c6c6c6" stroke-width="1.3"/><path d="M2 837.5H58" stroke="#c6c6c6" stroke-width="1.3"/><path d="M2 891H58" stroke="#c6c6c6" stroke-width="1.3"/><path d="M2 970.5H58" stroke="#c6c6c6" stroke-width="1.3"/><path d="M2 1050.5H58" stroke="#c6c6c6" stroke-width="1.3"/><path d="M2 1130.5H58" stroke="#c6c6c6" stroke-width="1.3"/><path d="M2 1210.5H58" stroke="#c6c6c6" stroke-width="1.3"/><path d="M2 1290.5H58" stroke="#c6c6c6" stroke-width="1.3"/><path d="M2 1370.5H58" stroke="#c6c6c6" stroke-width="1.3"/><path d="M2 1450.5H58" stroke="#c6c6c6" stroke-width="1.3"/><path d="M100.5 544.5H2360" stroke="#d0d0d0" stroke-width="1.5"/><path d="M100.5 797H2360" stroke="#d0d0d0" stroke-width="1.5"/><path d="M914.5 837.6V890" stroke="#d3d3d3" stroke-width="1.2" stroke-dasharray="3.8 4.6"/><path d="M1068.5 837.6V890" stroke="#d3d3d3" stroke-width="1.2" stroke-dasharray="3.8 4.6"/><path d="M1222.5 837.6V890" stroke="#d3d3d3" stroke-width="1.2" stroke-dasharray="3.8 4.6"/><path d="M1376.5 837.6V890" stroke="#d3d3d3" stroke-width="1.2" stroke-dasharray="3.8 4.6"/><path d="M1530.5 837.6V890" stroke="#d3d3d3" stroke-width="1.2" stroke-dasharray="3.8 4.6"/><path d="M1684.5 837.6V890" stroke="#d3d3d3" stroke-width="1.2" stroke-dasharray="3.8 4.6"/><path d="M1838.5 837.6V890" stroke="#d3d3d3" stroke-width="1.2" stroke-dasharray="3.8 4.6"/><path d="M1992.5 837.6V890" stroke="#d3d3d3" stroke-width="1.2" stroke-dasharray="3.8 4.6"/><path d="M2146.5 837.6V890" stroke="#d3d3d3" stroke-width="1.2" stroke-dasharray="3.8 4.6"/><path d="M2300.5 837.6V890" stroke="#d3d3d3" stroke-width="1.2" stroke-dasharray="3.8 4.6"/><rect x="100.5" y="1050.5" width="2259.5" height="80.0" fill="#c6e0b4"/><rect x="100.5" y="1210.5" width="2259.5" height="80.0" fill="#c6e0b4"/><rect x="100.5" y="1370.5" width="2259.5" height="80.0" fill="#c6e0b4"/><path d="M100.5 970.5H2360" stroke="#a9d08e" stroke-width="1.3"/><path d="M100.5 1050.5H2360" stroke="#a9d08e" stroke-width="1.3"/><path d="M100.5 1130.5H2360" stroke="#a9d08e" stroke-width="1.3"/><path d="M100.5 1210.5H2360" stroke="#a9d08e" stroke-width="1.3"/><path d="M100.5 1290.5H2360" stroke="#a9d08e" stroke-width="1.3"/><path d="M100.5 1370.5H2360" stroke="#a9d08e" stroke-width="1.3"/><path d="M100.5 1450.5H2360" stroke="#a9d08e" stroke-width="1.3"/><path d="M100.3 892.3V970" stroke="#a9d08e" stroke-width="1.25" stroke-dasharray="6.3 2"/><path d="M100.3 971.5V1510" stroke="#a9d08e" stroke-width="1.1" stroke-dasharray="4.2 3.9"/><path d="M100.3 1051.5V1129.5" stroke="#c6e0b4" stroke-width="2"/><path d="M100.3 1051.5V1129.5" stroke="#fff" stroke-width="1.25" stroke-dasharray="4.2 3.9" stroke-dashoffset="-7.10"/><path d="M100.3 1211.5V1289.5" stroke="#c6e0b4" stroke-width="2"/><path d="M100.3 1211.5V1289.5" stroke="#fff" stroke-width="1.25" stroke-dasharray="4.2 3.9" stroke-dashoffset="-5.10"/><path d="M100.3 1371.5V1449.5" stroke="#c6e0b4" stroke-width="2"/><path d="M100.3 1371.5V1449.5" stroke="#fff" stroke-width="1.25" stroke-dasharray="4.2 3.9" stroke-dashoffset="-3.10"/><path d="M430.5 892.3V970" stroke="#a9d08e" stroke-width="1.25" stroke-dasharray="6.3 2"/><path d="M430.5 971.5V1510" stroke="#a9d08e" stroke-width="1.1" stroke-dasharray="4.2 3.9"/><path d="M430.5 1051.5V1129.5" stroke="#c6e0b4" stroke-width="2"/><path d="M430.5 1051.5V1129.5" stroke="#fff" stroke-width="1.25" stroke-dasharray="4.2 3.9" stroke-dashoffset="-7.10"/><path d="M430.5 1211.5V1289.5" stroke="#c6e0b4" stroke-width="2"/><path d="M430.5 1211.5V1289.5" stroke="#fff" stroke-width="1.25" stroke-dasharray="4.2 3.9" stroke-dashoffset="-5.10"/><path d="M430.5 1371.5V1449.5" stroke="#c6e0b4" stroke-width="2"/><path d="M430.5 1371.5V1449.5" stroke="#fff" stroke-width="1.25" stroke-dasharray="4.2 3.9" stroke-dashoffset="-3.10"/><path d="M914.5 892.3V970" stroke="#a9d08e" stroke-width="1.25" stroke-dasharray="6.3 2"/><path d="M914.5 971.5V1510" stroke="#a9d08e" stroke-width="1.1" stroke-dasharray="4.2 3.9"/><path d="M914.5 1051.5V1129.5" stroke="#c6e0b4" stroke-width="2"/><path d="M914.5 1051.5V1129.5" stroke="#fff" stroke-width="1.25" stroke-dasharray="4.2 3.9" stroke-dashoffset="-7.10"/><path d="M914.5 1211.5V1289.5" stroke="#c6e0b4" stroke-width="2"/><path d="M914.5 1211.5V1289.5" stroke="#fff" stroke-width="1.25" stroke-dasharray="4.2 3.9" stroke-dashoffset="-5.10"/><path d="M914.5 1371.5V1449.5" stroke="#c6e0b4" stroke-width="2"/><path d="M914.5 1371.5V1449.5" stroke="#fff" stroke-width="1.25" stroke-dasharray="4.2 3.9" stroke-dashoffset="-3.10"/><path d="M1068.5 892.3V970" stroke="#a9d08e" stroke-width="1.25" stroke-dasharray="6.3 2"/><path d="M1068.5 971.5V1510" stroke="#a9d08e" stroke-width="1.1" stroke-dasharray="4.2 3.9"/><path d="M1068.5 1051.5V1129.5" stroke="#c6e0b4" stroke-width="2"/><path d="M1068.5 1051.5V1129.5" stroke="#fff" stroke-width="1.25" stroke-dasharray="4.2 3.9" stroke-dashoffset="-7.10"/><path d="M1068.5 1211.5V1289.5" stroke="#c6e0b4" stroke-width="2"/><path d="M1068.5 1211.5V1289.5" stroke="#fff" stroke-width="1.25" stroke-dasharray="4.2 3.9" stroke-dashoffset="-5.10"/><path d="M1068.5 1371.5V1449.5" stroke="#c6e0b4" stroke-width="2"/><path d="M1068.5 1371.5V1449.5" stroke="#fff" stroke-width="1.25" stroke-dasharray="4.2 3.9" stroke-dashoffset="-3.10"/><path d="M1222.5 892.3V970" stroke="#a9d08e" stroke-width="1.25" stroke-dasharray="6.3 2"/><path d="M1222.5 971.5V1510" stroke="#a9d08e" stroke-width="1.1" stroke-dasharray="4.2 3.9"/><path d="M1222.5 1051.5V1129.5" stroke="#c6e0b4" stroke-width="2"/><path d="M1222.5 1051.5V1129.5" stroke="#fff" stroke-width="1.25" stroke-dasharray="4.2 3.9" stroke-dashoffset="-7.10"/><path d="M1222.5 1211.5V1289.5" stroke="#c6e0b4" stroke-width="2"/><path d="M1222.5 1211.5V1289.5" stroke="#fff" stroke-width="1.25" stroke-dasharray="4.2 3.9" stroke-dashoffset="-5.10"/><path d="M1222.5 1371.5V1449.5" stroke="#c6e0b4" stroke-width="2"/><path d="M1222.5 1371.5V1449.5" stroke="#fff" stroke-width="1.25" stroke-dasharray="4.2 3.9" stroke-dashoffset="-3.10"/><path d="M1376.5 892.3V970" stroke="#a9d08e" stroke-width="1.25" stroke-dasharray="6.3 2"/><path d="M1376.5 971.5V1510" stroke="#a9d08e" stroke-width="1.1" stroke-dasharray="4.2 3.9"/><path d="M1376.5 1051.5V1129.5" stroke="#c6e0b4" stroke-width="2"/><path d="M1376.5 1051.5V1129.5" stroke="#fff" stroke-width="1.25" stroke-dasharray="4.2 3.9" stroke-dashoffset="-7.10"/><path d="M1376.5 1211.5V1289.5" stroke="#c6e0b4" stroke-width="2"/><path d="M1376.5 1211.5V1289.5" stroke="#fff" stroke-width="1.25" stroke-dasharray="4.2 3.9" stroke-dashoffset="-5.10"/><path d="M1376.5 1371.5V1449.5" stroke="#c6e0b4" stroke-width="2"/><path d="M1376.5 1371.5V1449.5" stroke="#fff" stroke-width="1.25" stroke-dasharray="4.2 3.9" stroke-dashoffset="-3.10"/><path d="M1530.5 892.3V970" stroke="#a9d08e" stroke-width="1.25" stroke-dasharray="6.3 2"/><path d="M1530.5 971.5V1510" stroke="#a9d08e" stroke-width="1.1" stroke-dasharray="4.2 3.9"/><path d="M1530.5 1051.5V1129.5" stroke="#c6e0b4" stroke-width="2"/><path d="M1530.5 1051.5V1129.5" stroke="#fff" stroke-width="1.25" stroke-dasharray="4.2 3.9" stroke-dashoffset="-7.10"/><path d="M1530.5 1211.5V1289.5" stroke="#c6e0b4" stroke-width="2"/><path d="M1530.5 1211.5V1289.5" stroke="#fff" stroke-width="1.25" stroke-dasharray="4.2 3.9" stroke-dashoffset="-5.10"/><path d="M1530.5 1371.5V1449.5" stroke="#c6e0b4" stroke-width="2"/><path d="M1530.5 1371.5V1449.5" stroke="#fff" stroke-width="1.25" stroke-dasharray="4.2 3.9" stroke-dashoffset="-3.10"/><path d="M1684.5 892.3V970" stroke="#a9d08e" stroke-width="1.25" stroke-dasharray="6.3 2"/><path d="M1684.5 971.5V1510" stroke="#a9d08e" stroke-width="1.1" stroke-dasharray="4.2 3.9"/><path d="M1684.5 1051.5V1129.5" stroke="#c6e0b4" stroke-width="2"/><path d="M1684.5 1051.5V1129.5" stroke="#fff" stroke-width="1.25" stroke-dasharray="4.2 3.9" stroke-dashoffset="-7.10"/><path d="M1684.5 1211.5V1289.5" stroke="#c6e0b4" stroke-width="2"/><path d="M1684.5 1211.5V1289.5" stroke="#fff" stroke-width="1.25" stroke-dasharray="4.2 3.9" stroke-dashoffset="-5.10"/><path d="M1684.5 1371.5V1449.5" stroke="#c6e0b4" stroke-width="2"/><path d="M1684.5 1371.5V1449.5" stroke="#fff" stroke-width="1.25" stroke-dasharray="4.2 3.9" stroke-dashoffset="-3.10"/><path d="M1838.5 892.3V970" stroke="#a9d08e" stroke-width="1.25" stroke-dasharray="6.3 2"/><path d="M1838.5 971.5V1510" stroke="#a9d08e" stroke-width="1.1" stroke-dasharray="4.2 3.9"/><path d="M1838.5 1051.5V1129.5" stroke="#c6e0b4" stroke-width="2"/><path d="M1838.5 1051.5V1129.5" stroke="#fff" stroke-width="1.25" stroke-dasharray="4.2 3.9" stroke-dashoffset="-7.10"/><path d="M1838.5 1211.5V1289.5" stroke="#c6e0b4" stroke-width="2"/><path d="M1838.5 1211.5V1289.5" stroke="#fff" stroke-width="1.25" stroke-dasharray="4.2 3.9" stroke-dashoffset="-5.10"/><path d="M1838.5 1371.5V1449.5" stroke="#c6e0b4" stroke-width="2"/><path d="M1838.5 1371.5V1449.5" stroke="#fff" stroke-width="1.25" stroke-dasharray="4.2 3.9" stroke-dashoffset="-3.10"/><path d="M1992.5 892.3V970" stroke="#a9d08e" stroke-width="1.25" stroke-dasharray="6.3 2"/><path d="M1992.5 971.5V1510" stroke="#a9d08e" stroke-width="1.1" stroke-dasharray="4.2 3.9"/><path d="M1992.5 1051.5V1129.5" stroke="#c6e0b4" stroke-width="2"/><path d="M1992.5 1051.5V1129.5" stroke="#fff" stroke-width="1.25" stroke-dasharray="4.2 3.9" stroke-dashoffset="-7.10"/><path d="M1992.5 1211.5V1289.5" stroke="#c6e0b4" stroke-width="2"/><path d="M1992.5 1211.5V1289.5" stroke="#fff" stroke-width="1.25" stroke-dasharray="4.2 3.9" stroke-dashoffset="-5.10"/><path d="M1992.5 1371.5V1449.5" stroke="#c6e0b4" stroke-width="2"/><path d="M1992.5 1371.5V1449.5" stroke="#fff" stroke-width="1.25" stroke-dasharray="4.2 3.9" stroke-dashoffset="-3.10"/><path d="M2146.5 892.3V970" stroke="#a9d08e" stroke-width="1.25" stroke-dasharray="6.3 2"/><path d="M2146.5 971.5V1510" stroke="#a9d08e" stroke-width="1.1" stroke-dasharray="4.2 3.9"/><path d="M2146.5 1051.5V1129.5" stroke="#c6e0b4" stroke-width="2"/><path d="M2146.5 1051.5V1129.5" stroke="#fff" stroke-width="1.25" stroke-dasharray="4.2 3.9" stroke-dashoffset="-7.10"/><path d="M2146.5 1211.5V1289.5" stroke="#c6e0b4" stroke-width="2"/><path d="M2146.5 1211.5V1289.5" stroke="#fff" stroke-width="1.25" stroke-dasharray="4.2 3.9" stroke-dashoffset="-5.10"/><path d="M2146.5 1371.5V1449.5" stroke="#c6e0b4" stroke-width="2"/><path d="M2146.5 1371.5V1449.5" stroke="#fff" stroke-width="1.25" stroke-dasharray="4.2 3.9" stroke-dashoffset="-3.10"/><path d="M2300.5 892.3V970" stroke="#a9d08e" stroke-width="1.25" stroke-dasharray="6.3 2"/><path d="M2300.5 971.5V1510" stroke="#a9d08e" stroke-width="1.1" stroke-dasharray="4.2 3.9"/><path d="M2300.5 1051.5V1129.5" stroke="#c6e0b4" stroke-width="2"/><path d="M2300.5 1051.5V1129.5" stroke="#fff" stroke-width="1.25" stroke-dasharray="4.2 3.9" stroke-dashoffset="-7.10"/><path d="M2300.5 1211.5V1289.5" stroke="#c6e0b4" stroke-width="2"/><path d="M2300.5 1211.5V1289.5" stroke="#fff" stroke-width="1.25" stroke-dasharray="4.2 3.9" stroke-dashoffset="-5.10"/><path d="M2300.5 1371.5V1449.5" stroke="#c6e0b4" stroke-width="2"/><path d="M2300.5 1371.5V1449.5" stroke="#fff" stroke-width="1.25" stroke-dasharray="4.2 3.9" stroke-dashoffset="-3.10"/><polyline points="446.2,1022.3 473.4,990.8 500.5,1010.5 527.7,1030.2 554.9,975.1 582.0,990.8 609.2,1030.2 636.4,994.8 663.6,983.0 690.7,1030.2 717.9,1045.9 745.1,1014.4" fill="none" stroke="#375623" stroke-width="2.65" stroke-linejoin="miter"/><path d="M551.1 975.1L554.9 971.3L558.7 975.1L554.9 978.9Z" fill="#375623"/><path d="M714.1 1045.9L717.9 1042.1L721.7 1045.9L717.9 1049.7Z" fill="#375623"/><polyline points="446.2,1061.8 473.4,1102.3 500.5,1115.8 527.7,1092.2 554.9,1098.9 582.0,1075.3 609.2,1075.3 636.4,1125.9 663.6,1115.8 690.7,1095.6 717.9,1055.1 745.1,1122.5" fill="none" stroke="#375623" stroke-width="2.65" stroke-linejoin="miter"/><path d="M632.6 1125.9L636.4 1122.1L640.2 1125.9L636.4 1129.7Z" fill="#375623"/><path d="M714.1 1055.1L717.9 1051.3L721.7 1055.1L717.9 1058.9Z" fill="#375623"/><polyline points="446.2,1135.1 473.4,1145.7 500.5,1205.9 527.7,1159.9 554.9,1181.1 582.0,1198.8 609.2,1145.7 636.4,1191.7 663.6,1202.4 690.7,1138.6 717.9,1170.5 745.1,1167.0" fill="none" stroke="#375623" stroke-width="2.65" stroke-linejoin="miter"/><path d="M442.4 1135.1L446.2 1131.3L450.0 1135.1L446.2 1138.9Z" fill="#375623"/><path d="M496.7 1205.9L500.5 1202.1L504.3 1205.9L500.5 1209.7Z" fill="#375623"/><polyline points="446.2,1232.8 473.4,1285.9 500.5,1275.3 527.7,1250.5 554.9,1222.2 582.0,1264.7 609.2,1222.2 636.4,1282.4 663.6,1285.9 690.7,1257.6 717.9,1236.3 745.1,1215.1" fill="none" stroke="#375623" stroke-width="2.65" stroke-linejoin="miter"/><path d="M469.6 1285.9L473.4 1282.1L477.2 1285.9L473.4 1289.7Z" fill="#375623"/><path d="M659.8 1285.9L663.6 1282.1L667.4 1285.9L663.6 1289.7Z" fill="#375623"/><path d="M741.3 1215.1L745.1 1211.3L748.9 1215.1L745.1 1218.9Z" fill="#375623"/><polyline points="446.2,1335.6 473.4,1335.6 500.5,1315.3 527.7,1332.2 554.9,1365.9 582.0,1325.4 609.2,1332.2 636.4,1338.9 663.6,1312.0 690.7,1335.6 717.9,1295.1 745.1,1335.6" fill="none" stroke="#375623" stroke-width="2.65" stroke-linejoin="miter"/><path d="M551.1 1365.9L554.9 1362.1L558.7 1365.9L554.9 1369.7Z" fill="#375623"/><path d="M714.1 1295.1L717.9 1291.3L721.7 1295.1L717.9 1298.9Z" fill="#375623"/><polyline points="446.2,1445.9 473.4,1396.3 500.5,1431.7 527.7,1407.0 554.9,1414.0 582.0,1375.1 609.2,1378.6 636.4,1442.4 663.6,1410.5 690.7,1428.2 717.9,1392.8 745.1,1383.2" fill="none" stroke="#375623" stroke-width="2.65" stroke-linejoin="miter"/><path d="M442.4 1445.9L446.2 1442.1L450.0 1445.9L446.2 1449.7Z" fill="#375623"/><path d="M578.2 1375.1L582.0 1371.3L585.8 1375.1L582.0 1378.9Z" fill="#375623"/><polyline points="446.2,1507.3 473.4,1473.7 500.5,1496.1 527.7,1496.1 554.9,1458.8 582.0,1503.5 609.2,1462.6 636.4,1525.9 663.6,1484.9 690.7,1455.1 717.9,1477.5 745.1,1492.4" fill="none" stroke="#375623" stroke-width="2.65" stroke-linejoin="miter"/><path d="M632.6 1525.9L636.4 1522.1L640.2 1525.9L636.4 1529.7Z" fill="#375623"/><path d="M686.9 1455.1L690.7 1451.3L694.5 1455.1L690.7 1458.9Z" fill="#375623"/><path d="M760.9 407.6V1510" stroke="#8f8f8f" stroke-width="2"/><path d="M2 891.2H2360" stroke="#8f8f8f" stroke-width="2.1"/></svg>
<span style="position:absolute;top:413.00px;font:400 29px/1 'Liberation Serif',serif;color:#111;white-space:pre;left:70.48px;transform:scaleX(0.8300);transform-origin:0 0;">A</span>
<span style="position:absolute;top:413.00px;font:400 29px/1 'Liberation Serif',serif;color:#111;white-space:pre;left:257.98px;transform:scaleX(0.8300);transform-origin:0 0;">B</span>
<span style="position:absolute;top:413.00px;font:400 29px/1 'Liberation Serif',serif;color:#111;white-space:pre;left:587.82px;transform:scaleX(0.8300);transform-origin:0 0;">C</span>
<span style="position:absolute;top:413.00px;font:400 29px/1 'Liberation Serif',serif;color:#217346;white-space:pre;left:829.40px;transform:scaleX(0.8300);transform-origin:0 0;">D</span>
<span style="position:absolute;top:413.00px;font:400 29px/1 'Liberation Serif',serif;color:#111;white-space:pre;left:984.65px;transform:scaleX(0.8300);transform-origin:0 0;">E</span>
<span style="position:absolute;top:413.00px;font:400 29px/1 'Liberation Serif',serif;color:#111;white-space:pre;left:1139.06px;transform:scaleX(0.8300);transform-origin:0 0;">F</span>
<span style="position:absolute;top:413.00px;font:400 29px/1 'Liberation Serif',serif;color:#111;white-space:pre;left:1290.57px;transform:scaleX(0.8300);transform-origin:0 0;">G</span>
<span style="position:absolute;top:413.00px;font:400 29px/1 'Liberation Serif',serif;color:#111;white-space:pre;left:1444.99px;transform:scaleX(0.8300);transform-origin:0 0;">H</span>
<span style="position:absolute;top:413.00px;font:400 29px/1 'Liberation Serif',serif;color:#111;white-space:pre;left:1603.55px;transform:scaleX(0.8300);transform-origin:0 0;">I</span>
<span style="position:absolute;top:413.00px;font:400 29px/1 'Liberation Serif',serif;color:#111;white-space:pre;left:1757.13px;transform:scaleX(0.8300);transform-origin:0 0;">J</span>
<span style="position:absolute;top:413.00px;font:400 29px/1 'Liberation Serif',serif;color:#111;white-space:pre;left:1906.99px;transform:scaleX(0.8300);transform-origin:0 0;">K</span>
<span style="position:absolute;top:413.00px;font:400 29px/1 'Liberation Serif',serif;color:#111;white-space:pre;left:2063.06px;transform:scaleX(0.8300);transform-origin:0 0;">L</span>
<span style="position:absolute;top:413.00px;font:400 29px/1 'Liberation Serif',serif;color:#111;white-space:pre;left:2213.32px;transform:scaleX(0.8300);transform-origin:0 0;">M</span>
<span style="position:absolute;top:514.00px;font:400 29.5px/1 'Liberation Serif',serif;color:#222;white-space:pre;left:22.62px;">1</span>
<span style="position:absolute;top:606.00px;font:400 29.5px/1 'Liberation Serif',serif;color:#222;white-space:pre;left:22.62px;">2</span>
<span style="position:absolute;top:766.00px;font:400 29.5px/1 'Liberation Serif',serif;color:#222;white-space:pre;left:22.62px;">3</span>
<span style="position:absolute;top:807.00px;font:400 29.5px/1 'Liberation Serif',serif;color:#222;white-space:pre;left:22.62px;">4</span>
<span style="position:absolute;top:860.00px;font:400 29.5px/1 'Liberation Serif',serif;color:#222;white-space:pre;left:22.62px;">5</span>
<span style="position:absolute;top:940.00px;font:400 29.5px/1 'Liberation Serif',serif;color:#222;white-space:pre;left:22.62px;">6</span>
<span style="position:absolute;top:1020.00px;font:400 29.5px/1 'Liberation Serif',serif;color:#222;white-space:pre;left:22.62px;">7</span>
<span style="position:absolute;top:1100.00px;font:400 29.5px/1 'Liberation Serif',serif;color:#222;white-space:pre;left:22.62px;">8</span>
<span style="position:absolute;top:1180.00px;font:400 29.5px/1 'Liberation Serif',serif;color:#222;white-space:pre;left:22.62px;">9</span>
<span style="position:absolute;top:1260.00px;font:400 29.5px/1 'Liberation Serif',serif;color:#222;white-space:pre;left:15.25px;">10</span>
<span style="position:absolute;top:1340.00px;font:400 29.5px/1 'Liberation Serif',serif;color:#222;white-space:pre;left:15.80px;">11</span>
<span style="position:absolute;top:1420.00px;font:400 29.5px/1 'Liberation Serif',serif;color:#222;white-space:pre;left:15.25px;">12</span>
<span style="position:absolute;top:1500.00px;font:400 29.5px/1 'Liberation Serif',serif;color:#222;white-space:pre;left:15.25px;">13</span>
<span style="position:absolute;top:468.00px;font:400 58px/1 'Liberation Sans',sans-serif;color:#000;white-space:pre;left:108.18px;transform:scaleX(1.0153);transform-origin:0 0;">Tekworks Solutions</span>
<span style="position:absolute;top:571.00px;font:italic 400 44px/1 'Liberation Serif',serif;color:#375623;white-space:pre;left:108.37px;transform:scaleX(1.0142);transform-origin:0 0;">Twelve Month</span>
<span style="position:absolute;top:688.00px;font:400 62.6px/1 'Liberation Serif',serif;color:#000;white-space:pre;left:111.63px;transform:scaleX(0.9660);transform-origin:0 0;">Profit &amp; Loss Projection</span>
<span style="position:absolute;top:577.00px;font:italic 400 30px/1 'Liberation Serif',serif;color:#375623;white-space:pre;left:920.64px;transform:scaleX(0.9449);transform-origin:0 0;">Fiscal Year:</span>
<span style="position:absolute;top:577.00px;font:italic 400 30px/1 'Liberation Serif',serif;color:#375623;white-space:pre;left:1117.00px;transform:scaleX(0.9079);transform-origin:0 0;">JAN</span>
<span style="position:absolute;top:577.00px;font:italic 400 30px/1 'Liberation Serif',serif;color:#375623;white-space:pre;left:1267.00px;transform:scaleX(1.0140);transform-origin:0 0;">2021</span>
<span style="position:absolute;top:853.00px;font:400 25.8px/1 'Liberation Sans',sans-serif;color:#000;white-space:pre;left:796.29px;transform:scaleX(0.9550);transform-origin:0 0;">JAN-21</span>
<span style="position:absolute;top:853.00px;font:400 25.8px/1 'Liberation Sans',sans-serif;color:#000;white-space:pre;left:948.65px;transform:scaleX(0.9550);transform-origin:0 0;">FEB-21</span>
<span style="position:absolute;top:853.00px;font:400 25.8px/1 'Liberation Sans',sans-serif;color:#000;white-space:pre;left:1099.23px;transform:scaleX(0.9550);transform-origin:0 0;">MAR-21</span>
<span style="position:absolute;top:853.00px;font:400 25.8px/1 'Liberation Sans',sans-serif;color:#000;white-space:pre;left:1256.23px;transform:scaleX(0.9550);transform-origin:0 0;">APR-21</span>
<span style="position:absolute;top:853.00px;font:400 25.8px/1 'Liberation Sans',sans-serif;color:#000;white-space:pre;left:1409.96px;transform:scaleX(0.9550);transform-origin:0 0;">MAY-21</span>
<span style="position:absolute;top:853.00px;font:400 25.8px/1 'Liberation Sans',sans-serif;color:#000;white-space:pre;left:1565.61px;transform:scaleX(0.9550);transform-origin:0 0;">JUN-21</span>
<span style="position:absolute;top:853.00px;font:400 25.8px/1 'Liberation Sans',sans-serif;color:#000;white-space:pre;left:1721.66px;transform:scaleX(0.9550);transform-origin:0 0;">JUL-21</span>
<span style="position:absolute;top:853.00px;font:400 25.8px/1 'Liberation Sans',sans-serif;color:#000;white-space:pre;left:1870.87px;transform:scaleX(0.9550);transform-origin:0 0;">AUG-21</span>
<span style="position:absolute;top:853.00px;font:400 25.8px/1 'Liberation Sans',sans-serif;color:#000;white-space:pre;left:2026.44px;transform:scaleX(0.9550);transform-origin:0 0;">SEP-21</span>
<span style="position:absolute;top:853.00px;font:400 25.8px/1 'Liberation Sans',sans-serif;color:#000;white-space:pre;left:2179.76px;transform:scaleX(0.9550);transform-origin:0 0;">OCT-21</span>
<div style="position:absolute;left:2301px;top:840px;width:59px;height:48px;overflow:hidden">
<span style="position:absolute;top:13.00px;font:400 25.8px/1 'Liberation Sans',sans-serif;color:#000;white-space:pre;left:30.09px;transform:scaleX(0.9550);transform-origin:0 0;">NOV-21</span>
</div>
<span style="position:absolute;top:919.00px;font:700 27.7px/1 'Liberation Sans',sans-serif;color:#44546a;white-space:pre;left:199.71px;transform:scaleX(0.8924);transform-origin:0 0;">EXPENSES</span>
<span style="position:absolute;top:919.00px;font:700 27.7px/1 'Liberation Sans',sans-serif;color:#44546a;white-space:pre;left:550.60px;transform:scaleX(0.9526);transform-origin:0 0;">TREND</span>
<span style="position:absolute;top:997.00px;font:400 30px/1 'Liberation Serif',serif;color:#000;white-space:pre;left:230.06px;transform:scaleX(1.0186);transform-origin:0 0;">Salary expenses</span>
<span style="position:absolute;top:997.00px;font:400 30px/1 'Liberation Serif',serif;color:#000;white-space:pre;left:774.58px;transform:scaleX(1.0214);transform-origin:0 0;">$</span>
<span style="position:absolute;top:997.00px;font:400 30px/1 'Liberation Serif',serif;color:#000;white-space:pre;left:873.71px;transform:scaleX(1.0100);transform-origin:0 0;">10</span>
<span style="position:absolute;top:997.00px;font:400 30px/1 'Liberation Serif',serif;color:#000;white-space:pre;left:928.58px;transform:scaleX(1.0214);transform-origin:0 0;">$</span>
<span style="position:absolute;top:997.00px;font:400 30px/1 'Liberation Serif',serif;color:#000;white-space:pre;left:1027.71px;transform:scaleX(1.0100);transform-origin:0 0;">18</span>
<span style="position:absolute;top:997.00px;font:400 30px/1 'Liberation Serif',serif;color:#000;white-space:pre;left:1082.58px;transform:scaleX(1.0214);transform-origin:0 0;">$</span>
<span style="position:absolute;top:997.00px;font:400 30px/1 'Liberation Serif',serif;color:#000;white-space:pre;left:1181.71px;transform:scaleX(1.0100);transform-origin:0 0;">13</span>
<span style="position:absolute;top:997.00px;font:400 30px/1 'Liberation Serif',serif;color:#000;white-space:pre;left:1236.58px;transform:scaleX(1.0214);transform-origin:0 0;">$</span>
<span style="position:absolute;top:997.00px;font:400 30px/1 'Liberation Serif',serif;color:#000;white-space:pre;left:1350.86px;transform:scaleX(1.0100);transform-origin:0 0;">8</span>
<span style="position:absolute;top:997.00px;font:400 30px/1 'Liberation Serif',serif;color:#000;white-space:pre;left:1390.58px;transform:scaleX(1.0214);transform-origin:0 0;">$</span>
<span style="position:absolute;top:997.00px;font:400 30px/1 'Liberation Serif',serif;color:#000;white-space:pre;left:1489.71px;transform:scaleX(1.0100);transform-origin:0 0;">22</span>
<span style="position:absolute;top:997.00px;font:400 30px/1 'Liberation Serif',serif;color:#000;white-space:pre;left:1544.58px;transform:scaleX(1.0214);transform-origin:0 0;">$</span>
<span style="position:absolute;top:997.00px;font:400 30px/1 'Liberation Serif',serif;color:#000;white-space:pre;left:1643.71px;transform:scaleX(1.0100);transform-origin:0 0;">18</span>
<span style="position:absolute;top:997.00px;font:400 30px/1 'Liberation Serif',serif;color:#000;white-space:pre;left:1698.58px;transform:scaleX(1.0214);transform-origin:0 0;">$</span>
<span style="position:absolute;top:997.00px;font:400 30px/1 'Liberation Serif',serif;color:#000;white-space:pre;left:1812.86px;transform:scaleX(1.0100);transform-origin:0 0;">8</span>
<span style="position:absolute;top:997.00px;font:400 30px/1 'Liberation Serif',serif;color:#000;white-space:pre;left:1852.58px;transform:scaleX(1.0214);transform-origin:0 0;">$</span>
<span style="position:absolute;top:997.00px;font:400 30px/1 'Liberation Serif',serif;color:#000;white-space:pre;left:1950.70px;transform:scaleX(1.0100);transform-origin:0 0;">17</span>
<span style="position:absolute;top:997.00px;font:400 30px/1 'Liberation Serif',serif;color:#000;white-space:pre;left:2006.58px;transform:scaleX(1.0214);transform-origin:0 0;">$</span>
<span style="position:absolute;top:997.00px;font:400 30px/1 'Liberation Serif',serif;color:#000;white-space:pre;left:2105.71px;transform:scaleX(1.0100);transform-origin:0 0;">20</span>
<span style="position:absolute;top:997.00px;font:400 30px/1 'Liberation Serif',serif;color:#000;white-space:pre;left:2160.58px;transform:scaleX(1.0214);transform-origin:0 0;">$</span>
<span style="position:absolute;top:997.00px;font:400 30px/1 'Liberation Serif',serif;color:#000;white-space:pre;left:2274.86px;transform:scaleX(1.0100);transform-origin:0 0;">8</span>
<span style="position:absolute;top:997.00px;font:400 30px/1 'Liberation Serif',serif;color:#000;white-space:pre;left:2314.58px;transform:scaleX(1.0214);transform-origin:0 0;">$</span>
<span style="position:absolute;top:1077.00px;font:400 30px/1 'Liberation Serif',serif;color:#000;white-space:pre;left:220.90px;transform:scaleX(1.0135);transform-origin:0 0;">Payroll expenses</span>
<span style="position:absolute;top:1077.00px;font:400 30px/1 'Liberation Serif',serif;color:#000;white-space:pre;left:774.58px;transform:scaleX(1.0214);transform-origin:0 0;">$</span>
<span style="position:absolute;top:1077.00px;font:400 30px/1 'Liberation Serif',serif;color:#000;white-space:pre;left:873.71px;transform:scaleX(1.0100);transform-origin:0 0;">23</span>
<span style="position:absolute;top:1077.00px;font:400 30px/1 'Liberation Serif',serif;color:#000;white-space:pre;left:928.58px;transform:scaleX(1.0214);transform-origin:0 0;">$</span>
<span style="position:absolute;top:1077.00px;font:400 30px/1 'Liberation Serif',serif;color:#000;white-space:pre;left:1028.83px;transform:scaleX(1.0100);transform-origin:0 0;">11</span>
<span style="position:absolute;top:1077.00px;font:400 30px/1 'Liberation Serif',serif;color:#000;white-space:pre;left:1082.58px;transform:scaleX(1.0214);transform-origin:0 0;">$</span>
<span style="position:absolute;top:1077.00px;font:400 30px/1 'Liberation Serif',serif;color:#000;white-space:pre;left:1195.85px;transform:scaleX(1.0100);transform-origin:0 0;">7</span>
<span style="position:absolute;top:1077.00px;font:400 30px/1 'Liberation Serif',serif;color:#000;white-space:pre;left:1236.58px;transform:scaleX(1.0214);transform-origin:0 0;">$</span>
<span style="position:absolute;top:1077.00px;font:400 30px/1 'Liberation Serif',serif;color:#000;white-space:pre;left:1334.70px;transform:scaleX(1.0100);transform-origin:0 0;">14</span>
<span style="position:absolute;top:1077.00px;font:400 30px/1 'Liberation Serif',serif;color:#000;white-space:pre;left:1390.58px;transform:scaleX(1.0214);transform-origin:0 0;">$</span>
<span style="position:absolute;top:1077.00px;font:400 30px/1 'Liberation Serif',serif;color:#000;white-space:pre;left:1489.71px;transform:scaleX(1.0100);transform-origin:0 0;">12</span>
<span style="position:absolute;top:1077.00px;font:400 30px/1 'Liberation Serif',serif;color:#000;white-space:pre;left:1544.58px;transform:scaleX(1.0214);transform-origin:0 0;">$</span>
<span style="position:absolute;top:1077.00px;font:400 30px/1 'Liberation Serif',serif;color:#000;white-space:pre;left:1643.71px;transform:scaleX(1.0100);transform-origin:0 0;">19</span>
<span style="position:absolute;top:1077.00px;font:400 30px/1 'Liberation Serif',serif;color:#000;white-space:pre;left:1698.58px;transform:scaleX(1.0214);transform-origin:0 0;">$</span>
<span style="position:absolute;top:1077.00px;font:400 30px/1 'Liberation Serif',serif;color:#000;white-space:pre;left:1797.71px;transform:scaleX(1.0100);transform-origin:0 0;">19</span>
<span style="position:absolute;top:1077.00px;font:400 30px/1 'Liberation Serif',serif;color:#000;white-space:pre;left:1852.58px;transform:scaleX(1.0214);transform-origin:0 0;">$</span>
<span style="position:absolute;top:1077.00px;font:400 30px/1 'Liberation Serif',serif;color:#000;white-space:pre;left:1965.85px;transform:scaleX(1.0100);transform-origin:0 0;">4</span>
<span style="position:absolute;top:1077.00px;font:400 30px/1 'Liberation Serif',serif;color:#000;white-space:pre;left:2006.58px;transform:scaleX(1.0214);transform-origin:0 0;">$</span>
<span style="position:absolute;top:1077.00px;font:400 30px/1 'Liberation Serif',serif;color:#000;white-space:pre;left:2119.85px;transform:scaleX(1.0100);transform-origin:0 0;">7</span>
<span style="position:absolute;top:1077.00px;font:400 30px/1 'Liberation Serif',serif;color:#000;white-space:pre;left:2160.58px;transform:scaleX(1.0214);transform-origin:0 0;">$</span>
<span style="position:absolute;top:1077.00px;font:400 30px/1 'Liberation Serif',serif;color:#000;white-space:pre;left:2259.71px;transform:scaleX(1.0100);transform-origin:0 0;">13</span>
<span style="position:absolute;top:1077.00px;font:400 30px/1 'Liberation Serif',serif;color:#000;white-space:pre;left:2314.58px;transform:scaleX(1.0214);transform-origin:0 0;">$</span>
<span style="position:absolute;top:1157.00px;font:400 30px/1 'Liberation Serif',serif;color:#000;white-space:pre;left:224.98px;transform:scaleX(1.0185);transform-origin:0 0;">Outside services</span>
<span style="position:absolute;top:1157.00px;font:400 30px/1 'Liberation Serif',serif;color:#000;white-space:pre;left:774.58px;transform:scaleX(1.0214);transform-origin:0 0;">$</span>
<span style="position:absolute;top:1157.00px;font:400 30px/1 'Liberation Serif',serif;color:#000;white-space:pre;left:873.71px;transform:scaleX(1.0100);transform-origin:0 0;">23</span>
<span style="position:absolute;top:1157.00px;font:400 30px/1 'Liberation Serif',serif;color:#000;white-space:pre;left:928.58px;transform:scaleX(1.0214);transform-origin:0 0;">$</span>
<span style="position:absolute;top:1157.00px;font:400 30px/1 'Liberation Serif',serif;color:#000;white-space:pre;left:1027.71px;transform:scaleX(1.0100);transform-origin:0 0;">20</span>
<span style="position:absolute;top:1157.00px;font:400 30px/1 'Liberation Serif',serif;color:#000;white-space:pre;left:1082.58px;transform:scaleX(1.0214);transform-origin:0 0;">$</span>
<span style="position:absolute;top:1157.00px;font:400 30px/1 'Liberation Serif',serif;color:#000;white-space:pre;left:1196.86px;transform:scaleX(1.0100);transform-origin:0 0;">3</span>
<span style="position:absolute;top:1157.00px;font:400 30px/1 'Liberation Serif',serif;color:#000;white-space:pre;left:1236.58px;transform:scaleX(1.0214);transform-origin:0 0;">$</span>
<span style="position:absolute;top:1157.00px;font:400 30px/1 'Liberation Serif',serif;color:#000;white-space:pre;left:1334.70px;transform:scaleX(1.0100);transform-origin:0 0;">16</span>
<span style="position:absolute;top:1157.00px;font:400 30px/1 'Liberation Serif',serif;color:#000;white-space:pre;left:1390.58px;transform:scaleX(1.0214);transform-origin:0 0;">$</span>
<span style="position:absolute;top:1157.00px;font:400 30px/1 'Liberation Serif',serif;color:#000;white-space:pre;left:1489.71px;transform:scaleX(1.0100);transform-origin:0 0;">10</span>
<span style="position:absolute;top:1157.00px;font:400 30px/1 'Liberation Serif',serif;color:#000;white-space:pre;left:1544.58px;transform:scaleX(1.0214);transform-origin:0 0;">$</span>
<span style="position:absolute;top:1157.00px;font:400 30px/1 'Liberation Serif',serif;color:#000;white-space:pre;left:1658.86px;transform:scaleX(1.0100);transform-origin:0 0;">5</span>
<span style="position:absolute;top:1157.00px;font:400 30px/1 'Liberation Serif',serif;color:#000;white-space:pre;left:1698.58px;transform:scaleX(1.0214);transform-origin:0 0;">$</span>
<span style="position:absolute;top:1157.00px;font:400 30px/1 'Liberation Serif',serif;color:#000;white-space:pre;left:1797.71px;transform:scaleX(1.0100);transform-origin:0 0;">20</span>
<span style="position:absolute;top:1157.00px;font:400 30px/1 'Liberation Serif',serif;color:#000;white-space:pre;left:1852.58px;transform:scaleX(1.0214);transform-origin:0 0;">$</span>
<span style="position:absolute;top:1157.00px;font:400 30px/1 'Liberation Serif',serif;color:#000;white-space:pre;left:1965.85px;transform:scaleX(1.0100);transform-origin:0 0;">7</span>
<span style="position:absolute;top:1157.00px;font:400 30px/1 'Liberation Serif',serif;color:#000;white-space:pre;left:2006.58px;transform:scaleX(1.0214);transform-origin:0 0;">$</span>
<span style="position:absolute;top:1157.00px;font:400 30px/1 'Liberation Serif',serif;color:#000;white-space:pre;left:2119.85px;transform:scaleX(1.0100);transform-origin:0 0;">4</span>
<span style="position:absolute;top:1157.00px;font:400 30px/1 'Liberation Serif',serif;color:#000;white-space:pre;left:2160.58px;transform:scaleX(1.0214);transform-origin:0 0;">$</span>
<span style="position:absolute;top:1157.00px;font:400 30px/1 'Liberation Serif',serif;color:#000;white-space:pre;left:2259.71px;transform:scaleX(1.0100);transform-origin:0 0;">22</span>
<span style="position:absolute;top:1157.00px;font:400 30px/1 'Liberation Serif',serif;color:#000;white-space:pre;left:2314.58px;transform:scaleX(1.0214);transform-origin:0 0;">$</span>
<span style="position:absolute;top:1219.00px;font:400 30px/1 'Liberation Serif',serif;color:#000;white-space:pre;left:183.59px;transform:scaleX(1.0031);transform-origin:0 0;">Supplies (office and</span>
<span style="position:absolute;top:1254.00px;font:400 30px/1 'Liberation Serif',serif;color:#000;white-space:pre;left:295.64px;transform:scaleX(1.0611);transform-origin:0 0;">operating)</span>
<span style="position:absolute;top:1237.00px;font:400 30px/1 'Liberation Serif',serif;color:#000;white-space:pre;left:774.58px;transform:scaleX(1.0214);transform-origin:0 0;">$</span>
<span style="position:absolute;top:1237.00px;font:400 30px/1 'Liberation Serif',serif;color:#000;white-space:pre;left:873.71px;transform:scaleX(1.0100);transform-origin:0 0;">19</span>
<span style="position:absolute;top:1237.00px;font:400 30px/1 'Liberation Serif',serif;color:#000;white-space:pre;left:928.58px;transform:scaleX(1.0214);transform-origin:0 0;">$</span>
<span style="position:absolute;top:1237.00px;font:400 30px/1 'Liberation Serif',serif;color:#000;white-space:pre;left:1041.85px;transform:scaleX(1.0100);transform-origin:0 0;">4</span>
<span style="position:absolute;top:1237.00px;font:400 30px/1 'Liberation Serif',serif;color:#000;white-space:pre;left:1082.58px;transform:scaleX(1.0214);transform-origin:0 0;">$</span>
<span style="position:absolute;top:1237.00px;font:400 30px/1 'Liberation Serif',serif;color:#000;white-space:pre;left:1195.85px;transform:scaleX(1.0100);transform-origin:0 0;">7</span>
<span style="position:absolute;top:1237.00px;font:400 30px/1 'Liberation Serif',serif;color:#000;white-space:pre;left:1236.58px;transform:scaleX(1.0214);transform-origin:0 0;">$</span>
<span style="position:absolute;top:1237.00px;font:400 30px/1 'Liberation Serif',serif;color:#000;white-space:pre;left:1334.70px;transform:scaleX(1.0100);transform-origin:0 0;">14</span>
<span style="position:absolute;top:1237.00px;font:400 30px/1 'Liberation Serif',serif;color:#000;white-space:pre;left:1390.58px;transform:scaleX(1.0214);transform-origin:0 0;">$</span>
<span style="position:absolute;top:1237.00px;font:400 30px/1 'Liberation Serif',serif;color:#000;white-space:pre;left:1489.71px;transform:scaleX(1.0100);transform-origin:0 0;">22</span>
<span style="position:absolute;top:1237.00px;font:400 30px/1 'Liberation Serif',serif;color:#000;white-space:pre;left:1544.58px;transform:scaleX(1.0214);transform-origin:0 0;">$</span>
<span style="position:absolute;top:1237.00px;font:400 30px/1 'Liberation Serif',serif;color:#000;white-space:pre;left:1643.71px;transform:scaleX(1.0100);transform-origin:0 0;">10</span>
<span style="position:absolute;top:1237.00px;font:400 30px/1 'Liberation Serif',serif;color:#000;white-space:pre;left:1698.58px;transform:scaleX(1.0214);transform-origin:0 0;">$</span>
<span style="position:absolute;top:1237.00px;font:400 30px/1 'Liberation Serif',serif;color:#000;white-space:pre;left:1797.71px;transform:scaleX(1.0100);transform-origin:0 0;">22</span>
<span style="position:absolute;top:1237.00px;font:400 30px/1 'Liberation Serif',serif;color:#000;white-space:pre;left:1852.58px;transform:scaleX(1.0214);transform-origin:0 0;">$</span>
<span style="position:absolute;top:1237.00px;font:400 30px/1 'Liberation Serif',serif;color:#000;white-space:pre;left:1966.86px;transform:scaleX(1.0100);transform-origin:0 0;">5</span>
<span style="position:absolute;top:1237.00px;font:400 30px/1 'Liberation Serif',serif;color:#000;white-space:pre;left:2006.58px;transform:scaleX(1.0214);transform-origin:0 0;">$</span>
<span style="position:absolute;top:1237.00px;font:400 30px/1 'Liberation Serif',serif;color:#000;white-space:pre;left:2119.85px;transform:scaleX(1.0100);transform-origin:0 0;">4</span>
<span style="position:absolute;top:1237.00px;font:400 30px/1 'Liberation Serif',serif;color:#000;white-space:pre;left:2160.58px;transform:scaleX(1.0214);transform-origin:0 0;">$</span>
<span style="position:absolute;top:1237.00px;font:400 30px/1 'Liberation Serif',serif;color:#000;white-space:pre;left:2259.71px;transform:scaleX(1.0100);transform-origin:0 0;">12</span>
<span style="position:absolute;top:1237.00px;font:400 30px/1 'Liberation Serif',serif;color:#000;white-space:pre;left:2314.58px;transform:scaleX(1.0214);transform-origin:0 0;">$</span>
<span style="position:absolute;top:1317.00px;font:400 30px/1 'Liberation Serif',serif;color:#000;white-space:pre;left:115.50px;transform:scaleX(1.0288);transform-origin:0 0;">Repairs and maintenance</span>
<span style="position:absolute;top:1317.00px;font:400 30px/1 'Liberation Serif',serif;color:#000;white-space:pre;left:774.58px;transform:scaleX(1.0214);transform-origin:0 0;">$</span>
<span style="position:absolute;top:1317.00px;font:400 30px/1 'Liberation Serif',serif;color:#000;white-space:pre;left:874.83px;transform:scaleX(1.0100);transform-origin:0 0;">11</span>
<span style="position:absolute;top:1317.00px;font:400 30px/1 'Liberation Serif',serif;color:#000;white-space:pre;left:928.58px;transform:scaleX(1.0214);transform-origin:0 0;">$</span>
<span style="position:absolute;top:1317.00px;font:400 30px/1 'Liberation Serif',serif;color:#000;white-space:pre;left:1028.83px;transform:scaleX(1.0100);transform-origin:0 0;">11</span>
<span style="position:absolute;top:1317.00px;font:400 30px/1 'Liberation Serif',serif;color:#000;white-space:pre;left:1082.58px;transform:scaleX(1.0214);transform-origin:0 0;">$</span>
<span style="position:absolute;top:1317.00px;font:400 30px/1 'Liberation Serif',serif;color:#000;white-space:pre;left:1180.70px;transform:scaleX(1.0100);transform-origin:0 0;">17</span>
<span style="position:absolute;top:1317.00px;font:400 30px/1 'Liberation Serif',serif;color:#000;white-space:pre;left:1236.58px;transform:scaleX(1.0214);transform-origin:0 0;">$</span>
<span style="position:absolute;top:1317.00px;font:400 30px/1 'Liberation Serif',serif;color:#000;white-space:pre;left:1335.71px;transform:scaleX(1.0100);transform-origin:0 0;">12</span>
<span style="position:absolute;top:1317.00px;font:400 30px/1 'Liberation Serif',serif;color:#000;white-space:pre;left:1390.58px;transform:scaleX(1.0214);transform-origin:0 0;">$</span>
<span style="position:absolute;top:1317.00px;font:400 30px/1 'Liberation Serif',serif;color:#000;white-space:pre;left:1504.86px;transform:scaleX(1.0100);transform-origin:0 0;">2</span>
<span style="position:absolute;top:1317.00px;font:400 30px/1 'Liberation Serif',serif;color:#000;white-space:pre;left:1544.58px;transform:scaleX(1.0214);transform-origin:0 0;">$</span>
<span style="position:absolute;top:1317.00px;font:400 30px/1 'Liberation Serif',serif;color:#000;white-space:pre;left:1642.70px;transform:scaleX(1.0100);transform-origin:0 0;">14</span>
<span style="position:absolute;top:1317.00px;font:400 30px/1 'Liberation Serif',serif;color:#000;white-space:pre;left:1698.58px;transform:scaleX(1.0214);transform-origin:0 0;">$</span>
<span style="position:absolute;top:1317.00px;font:400 30px/1 'Liberation Serif',serif;color:#000;white-space:pre;left:1797.71px;transform:scaleX(1.0100);transform-origin:0 0;">12</span>
<span style="position:absolute;top:1317.00px;font:400 30px/1 'Liberation Serif',serif;color:#000;white-space:pre;left:1852.58px;transform:scaleX(1.0214);transform-origin:0 0;">$</span>
<span style="position:absolute;top:1317.00px;font:400 30px/1 'Liberation Serif',serif;color:#000;white-space:pre;left:1951.71px;transform:scaleX(1.0100);transform-origin:0 0;">10</span>
<span style="position:absolute;top:1317.00px;font:400 30px/1 'Liberation Serif',serif;color:#000;white-space:pre;left:2006.58px;transform:scaleX(1.0214);transform-origin:0 0;">$</span>
<span style="position:absolute;top:1317.00px;font:400 30px/1 'Liberation Serif',serif;color:#000;white-space:pre;left:2105.71px;transform:scaleX(1.0100);transform-origin:0 0;">18</span>
<span style="position:absolute;top:1317.00px;font:400 30px/1 'Liberation Serif',serif;color:#000;white-space:pre;left:2160.58px;transform:scaleX(1.0214);transform-origin:0 0;">$</span>
<span style="position:absolute;top:1317.00px;font:400 30px/1 'Liberation Serif',serif;color:#000;white-space:pre;left:2260.83px;transform:scaleX(1.0100);transform-origin:0 0;">11</span>
<span style="position:absolute;top:1317.00px;font:400 30px/1 'Liberation Serif',serif;color:#000;white-space:pre;left:2314.58px;transform:scaleX(1.0214);transform-origin:0 0;">$</span>
<span style="position:absolute;top:1397.00px;font:400 30px/1 'Liberation Serif',serif;color:#000;white-space:pre;left:283.10px;transform:scaleX(1.0046);transform-origin:0 0;">Advertising</span>
<span style="position:absolute;top:1397.00px;font:400 30px/1 'Liberation Serif',serif;color:#000;white-space:pre;left:774.58px;transform:scaleX(1.0214);transform-origin:0 0;">$</span>
<span style="position:absolute;top:1397.00px;font:400 30px/1 'Liberation Serif',serif;color:#000;white-space:pre;left:888.86px;transform:scaleX(1.0100);transform-origin:0 0;">2</span>
<span style="position:absolute;top:1397.00px;font:400 30px/1 'Liberation Serif',serif;color:#000;white-space:pre;left:928.58px;transform:scaleX(1.0214);transform-origin:0 0;">$</span>
<span style="position:absolute;top:1397.00px;font:400 30px/1 'Liberation Serif',serif;color:#000;white-space:pre;left:1026.70px;transform:scaleX(1.0100);transform-origin:0 0;">16</span>
<span style="position:absolute;top:1397.00px;font:400 30px/1 'Liberation Serif',serif;color:#000;white-space:pre;left:1082.58px;transform:scaleX(1.0214);transform-origin:0 0;">$</span>
<span style="position:absolute;top:1397.00px;font:400 30px/1 'Liberation Serif',serif;color:#000;white-space:pre;left:1195.85px;transform:scaleX(1.0100);transform-origin:0 0;">6</span>
<span style="position:absolute;top:1397.00px;font:400 30px/1 'Liberation Serif',serif;color:#000;white-space:pre;left:1236.58px;transform:scaleX(1.0214);transform-origin:0 0;">$</span>
<span style="position:absolute;top:1397.00px;font:400 30px/1 'Liberation Serif',serif;color:#000;white-space:pre;left:1335.71px;transform:scaleX(1.0100);transform-origin:0 0;">13</span>
<span style="position:absolute;top:1397.00px;font:400 30px/1 'Liberation Serif',serif;color:#000;white-space:pre;left:1390.58px;transform:scaleX(1.0214);transform-origin:0 0;">$</span>
<span style="position:absolute;top:1397.00px;font:400 30px/1 'Liberation Serif',serif;color:#000;white-space:pre;left:1490.83px;transform:scaleX(1.0100);transform-origin:0 0;">11</span>
<span style="position:absolute;top:1397.00px;font:400 30px/1 'Liberation Serif',serif;color:#000;white-space:pre;left:1544.58px;transform:scaleX(1.0214);transform-origin:0 0;">$</span>
<span style="position:absolute;top:1397.00px;font:400 30px/1 'Liberation Serif',serif;color:#000;white-space:pre;left:1643.71px;transform:scaleX(1.0100);transform-origin:0 0;">22</span>
<span style="position:absolute;top:1397.00px;font:400 30px/1 'Liberation Serif',serif;color:#000;white-space:pre;left:1698.58px;transform:scaleX(1.0214);transform-origin:0 0;">$</span>
<span style="position:absolute;top:1397.00px;font:400 30px/1 'Liberation Serif',serif;color:#000;white-space:pre;left:1797.71px;transform:scaleX(1.0100);transform-origin:0 0;">21</span>
<span style="position:absolute;top:1397.00px;font:400 30px/1 'Liberation Serif',serif;color:#000;white-space:pre;left:1852.58px;transform:scaleX(1.0214);transform-origin:0 0;">$</span>
<span style="position:absolute;top:1397.00px;font:400 30px/1 'Liberation Serif',serif;color:#000;white-space:pre;left:1966.86px;transform:scaleX(1.0100);transform-origin:0 0;">3</span>
<span style="position:absolute;top:1397.00px;font:400 30px/1 'Liberation Serif',serif;color:#000;white-space:pre;left:2006.58px;transform:scaleX(1.0214);transform-origin:0 0;">$</span>
<span style="position:absolute;top:1397.00px;font:400 30px/1 'Liberation Serif',serif;color:#000;white-space:pre;left:2105.71px;transform:scaleX(1.0100);transform-origin:0 0;">12</span>
<span style="position:absolute;top:1397.00px;font:400 30px/1 'Liberation Serif',serif;color:#000;white-space:pre;left:2160.58px;transform:scaleX(1.0214);transform-origin:0 0;">$</span>
<span style="position:absolute;top:1397.00px;font:400 30px/1 'Liberation Serif',serif;color:#000;white-space:pre;left:2273.85px;transform:scaleX(1.0100);transform-origin:0 0;">7</span>
<span style="position:absolute;top:1397.00px;font:400 30px/1 'Liberation Serif',serif;color:#000;white-space:pre;left:2314.58px;transform:scaleX(1.0214);transform-origin:0 0;">$</span>
<span style="position:absolute;top:1477.00px;font:400 30px/1 'Liberation Serif',serif;color:#000;white-space:pre;left:138.68px;transform:scaleX(1.0179);transform-origin:0 0;">Car, delivery and travel</span>
<span style="position:absolute;top:1477.00px;font:400 30px/1 'Liberation Serif',serif;color:#000;white-space:pre;left:774.58px;transform:scaleX(1.0214);transform-origin:0 0;">$</span>
<span style="position:absolute;top:1477.00px;font:400 30px/1 'Liberation Serif',serif;color:#000;white-space:pre;left:888.86px;transform:scaleX(1.0100);transform-origin:0 0;">8</span>
<span style="position:absolute;top:1477.00px;font:400 30px/1 'Liberation Serif',serif;color:#000;white-space:pre;left:928.58px;transform:scaleX(1.0214);transform-origin:0 0;">$</span>
<span style="position:absolute;top:1477.00px;font:400 30px/1 'Liberation Serif',serif;color:#000;white-space:pre;left:1026.70px;transform:scaleX(1.0100);transform-origin:0 0;">17</span>
<span style="position:absolute;top:1477.00px;font:400 30px/1 'Liberation Serif',serif;color:#000;white-space:pre;left:1082.58px;transform:scaleX(1.0214);transform-origin:0 0;">$</span>
<span style="position:absolute;top:1477.00px;font:400 30px/1 'Liberation Serif',serif;color:#000;white-space:pre;left:1182.83px;transform:scaleX(1.0100);transform-origin:0 0;">11</span>
<span style="position:absolute;top:1477.00px;font:400 30px/1 'Liberation Serif',serif;color:#000;white-space:pre;left:1236.58px;transform:scaleX(1.0214);transform-origin:0 0;">$</span>
<span style="position:absolute;top:1477.00px;font:400 30px/1 'Liberation Serif',serif;color:#000;white-space:pre;left:1336.83px;transform:scaleX(1.0100);transform-origin:0 0;">11</span>
<span style="position:absolute;top:1477.00px;font:400 30px/1 'Liberation Serif',serif;color:#000;white-space:pre;left:1390.58px;transform:scaleX(1.0214);transform-origin:0 0;">$</span>
<span style="position:absolute;top:1477.00px;font:400 30px/1 'Liberation Serif',serif;color:#000;white-space:pre;left:1489.71px;transform:scaleX(1.0100);transform-origin:0 0;">21</span>
<span style="position:absolute;top:1477.00px;font:400 30px/1 'Liberation Serif',serif;color:#000;white-space:pre;left:1544.58px;transform:scaleX(1.0214);transform-origin:0 0;">$</span>
<span style="position:absolute;top:1477.00px;font:400 30px/1 'Liberation Serif',serif;color:#000;white-space:pre;left:1658.86px;transform:scaleX(1.0100);transform-origin:0 0;">9</span>
<span style="position:absolute;top:1477.00px;font:400 30px/1 'Liberation Serif',serif;color:#000;white-space:pre;left:1698.58px;transform:scaleX(1.0214);transform-origin:0 0;">$</span>
<span style="position:absolute;top:1477.00px;font:400 30px/1 'Liberation Serif',serif;color:#000;white-space:pre;left:1797.71px;transform:scaleX(1.0100);transform-origin:0 0;">20</span>
<span style="position:absolute;top:1477.00px;font:400 30px/1 'Liberation Serif',serif;color:#000;white-space:pre;left:1852.58px;transform:scaleX(1.0214);transform-origin:0 0;">$</span>
<span style="position:absolute;top:1477.00px;font:400 30px/1 'Liberation Serif',serif;color:#000;white-space:pre;left:1966.86px;transform:scaleX(1.0100);transform-origin:0 0;">3</span>
<span style="position:absolute;top:1477.00px;font:400 30px/1 'Liberation Serif',serif;color:#000;white-space:pre;left:2006.58px;transform:scaleX(1.0214);transform-origin:0 0;">$</span>
<span style="position:absolute;top:1477.00px;font:400 30px/1 'Liberation Serif',serif;color:#000;white-space:pre;left:2104.70px;transform:scaleX(1.0100);transform-origin:0 0;">14</span>
<span style="position:absolute;top:1477.00px;font:400 30px/1 'Liberation Serif',serif;color:#000;white-space:pre;left:2160.58px;transform:scaleX(1.0214);transform-origin:0 0;">$</span>
<span style="position:absolute;top:1477.00px;font:400 30px/1 'Liberation Serif',serif;color:#000;white-space:pre;left:2259.71px;transform:scaleX(1.0100);transform-origin:0 0;">22</span>
<span style="position:absolute;top:1477.00px;font:400 30px/1 'Liberation Serif',serif;color:#000;white-space:pre;left:2314.58px;transform:scaleX(1.0214);transform-origin:0 0;">$</span>
<div style="position:absolute;left:2360px;top:408px;width:38px;height:1102.5px;background:#e6e6e6;"></div>
<div style="position:absolute;left:2394.9px;top:443px;width:3.1px;height:1067px;background:#ececec;"></div>
<div style="position:absolute;left:2361.8px;top:443px;width:33.1px;height:1035px;background:#d9d9d9;"></div>
<div style="position:absolute;left:2362.5px;top:409.5px;width:28.3px;height:27.3px;border:2px solid #b3b3b3;background:#fff"></div>
<div style="position:absolute;left:2362px;top:443.3px;width:29px;height:354.3px;border:2px solid #b3b3b3;background:#fff"></div>
<div style="position:absolute;left:2362.2px;top:1478.2px;width:28.5px;height:28.3px;border:2px solid #b3b3b3;background:#fff"></div>
<svg style="position:absolute;left:2360px;top:408px;" width="38" height="1102" viewBox="0 0 38 1102"><path d="M11.4 21H26.2L18.8 13.1Z M11 1083H26L18.5 1091Z" fill="#777"/></svg>
<div style="position:absolute;left:2359px;top:443px;width:1.2px;height:1067px;background:#a6a6a6;"></div>
<div style="position:absolute;left:2px;top:1510px;width:2396px;height:44px;background:#e6e6e6;"></div>
<div style="position:absolute;left:2px;top:1509.5px;width:2358px;height:1.5px;background:#a6a6a6;"></div>
<div style="position:absolute;left:2px;top:1553px;width:2396px;height:1.5px;background:#bcbcbc;"></div>
<div style="position:absolute;left:146.9px;top:1514px;width:1.3px;height:35px;background:#9a9a9a;"></div>
<div style="position:absolute;left:150.1px;top:1513.1px;width:233.1px;height:36.8px;background:#f4b084;"></div>
<div style="position:absolute;left:385px;top:1514px;width:1.2px;height:35px;background:#ababab;"></div>
<div style="position:absolute;left:388.2px;top:1513.1px;width:181.9px;height:36.8px;background:#8ea9db;"></div>
<div style="position:absolute;left:572px;top:1510px;width:138px;height:38px;border-left:1.3px solid #ababab;border-right:1.3px solid #ababab;background:linear-gradient(#fff 55%,#e4e4e4)"></div>
<div style="position:absolute;left:572px;top:1547.8px;width:140.5px;height:2.6px;background:#217346;"></div>
<span style="position:absolute;top:1518.00px;font:400 25.8px/1 'Liberation Sans',sans-serif;color:#000;white-space:pre;left:167.29px;transform:scaleX(0.9556);transform-origin:0 0;">Revenues (Sales)</span>
<span style="position:absolute;top:1518.00px;font:400 25.8px/1 'Liberation Sans',sans-serif;color:#000;white-space:pre;left:402.51px;transform:scaleX(0.9900);transform-origin:0 0;">Cost of Sales</span>
<span style="position:absolute;top:1518.00px;font:700 24px/1 'Liberation Sans',sans-serif;color:#217346;white-space:pre;left:584.27px;transform:scaleX(1.0314);transform-origin:0 0;">Expenses</span>
<svg style="position:absolute;left:30px;top:1518px;" width="70" height="28" viewBox="0 0 70 28"><path d="M14.5 6.3V20.9L5.900 13.600Z M48.900 6.300V20.900L57.300 13.600Z" fill="#c6c6c6"/></svg>
<svg style="position:absolute;left:0px;top:1500px;" width="2400" height="60" viewBox="0 1500 2400 60"><circle cx="777" cy="1532.9" r="15.2" fill="none" stroke="#808080" stroke-width="1.5"/><path d="M769.2 1532.9H784.800M777 1525.100V1540.700" stroke="#808080" stroke-width="3.6"/></svg>
<div style="position:absolute;left:1435px;top:1521px;width:3.6px;height:3.6px;background:#bdbdbd;"></div>
<div style="position:absolute;left:1435px;top:1529px;width:3.6px;height:3.6px;background:#bdbdbd;"></div>
<div style="position:absolute;left:1435px;top:1537px;width:3.6px;height:3.6px;background:#bdbdbd;"></div>
<div style="position:absolute;left:1460.5px;top:1515.4px;width:898.3px;height:32.3px;background:#d9d9d9;"></div>
<div style="position:absolute;left:1460.5px;top:1515.4px;width:28.5px;height:28.3px;border:2px solid #b3b3b3;background:#fff"></div>
<div style="position:absolute;left:1492.8px;top:1515.4px;width:425.4px;height:28.3px;border:2px solid #b3b3b3;background:#fff"></div>
<div style="position:absolute;left:2326.2px;top:1515.4px;width:28.6px;height:28.3px;border:2px solid #b3b3b3;background:#fff"></div>
<svg style="position:absolute;left:1460px;top:1516px;" width="900" height="31" viewBox="0 0 900 31"><path d="M20 8.1V23.1L12 15.6Z M879 8.1V23.1L887.2 15.6Z" fill="#777"/></svg>
<div style="position:absolute;left:0;top:0;width:2400px;height:1599px;will-change:transform">
<div style="position:absolute;left:2px;top:1554.5px;width:2396px;height:42.5px;background:#f3f2f1;"></div>
<span style="position:absolute;top:1567.00px;font:400 24px/1 'DejaVu Sans',sans-serif;color:#b7b7b7;white-space:pre;left:490.51px;transform:scaleX(1.0139);transform-origin:0 0;">This is an .XLSB file open in Microsoft Excel 365. © FileInfo.com</span>
<div style="position:absolute;left:1781.5px;top:1554.5px;width:80.5px;height:42.5px;background:#c8c6c4;"></div>
<svg style="position:absolute;left:0;top:1554px" width="2400" height="45" viewBox="0 1554 2400 45"><rect x="1809.1" y="1563" width="23.8" height="23.8" fill="none" stroke="#2b2b2b" stroke-width="2"/><path d="M1817 1563V1586.8M1825 1563V1586.800M1809 1571H1833M1809 1579H1833" stroke="#2b2b2b" stroke-width="2"/><rect x="1889" y="1563" width="26" height="23.8" fill="none" stroke="#2b2b2b" stroke-width="2"/><rect x="1895.8" y="1568.200" width="13" height="13.400" fill="none" stroke="#2b2b2b" stroke-width="1.7"/><path d="M1898.500 1572.600H1906.200M1898.500 1577.200H1906.200" stroke="#2b2b2b" stroke-width="1.6"/><path d="M1968.9 1563H1995V1586.800H1968.900ZM1977.700 1563V1576.600M1986.100 1563V1576.600M1968.900 1576.600H1986.100" fill="none" stroke="#2b2b2b" stroke-width="2"/><path d="M2033.8 1575.8H2049.200M2269.900 1575.800H2285.300M2277.600 1568.100V1583.500" stroke="#444" stroke-width="1.6"/><path d="M2061 1575.8H2259.200" stroke="#a0a0a0" stroke-width="1.5"/><rect x="2154.900" y="1565.400" width="10.400" height="21.600" fill="#6e6e6e"/></svg>
<span style="position:absolute;top:1567.00px;font:400 20.6px/1 'Liberation Sans',sans-serif;color:#555;white-space:pre;left:2311.78px;transform:scaleX(0.9248);transform-origin:0 0;">100%</span>
</div>

</body></html>
